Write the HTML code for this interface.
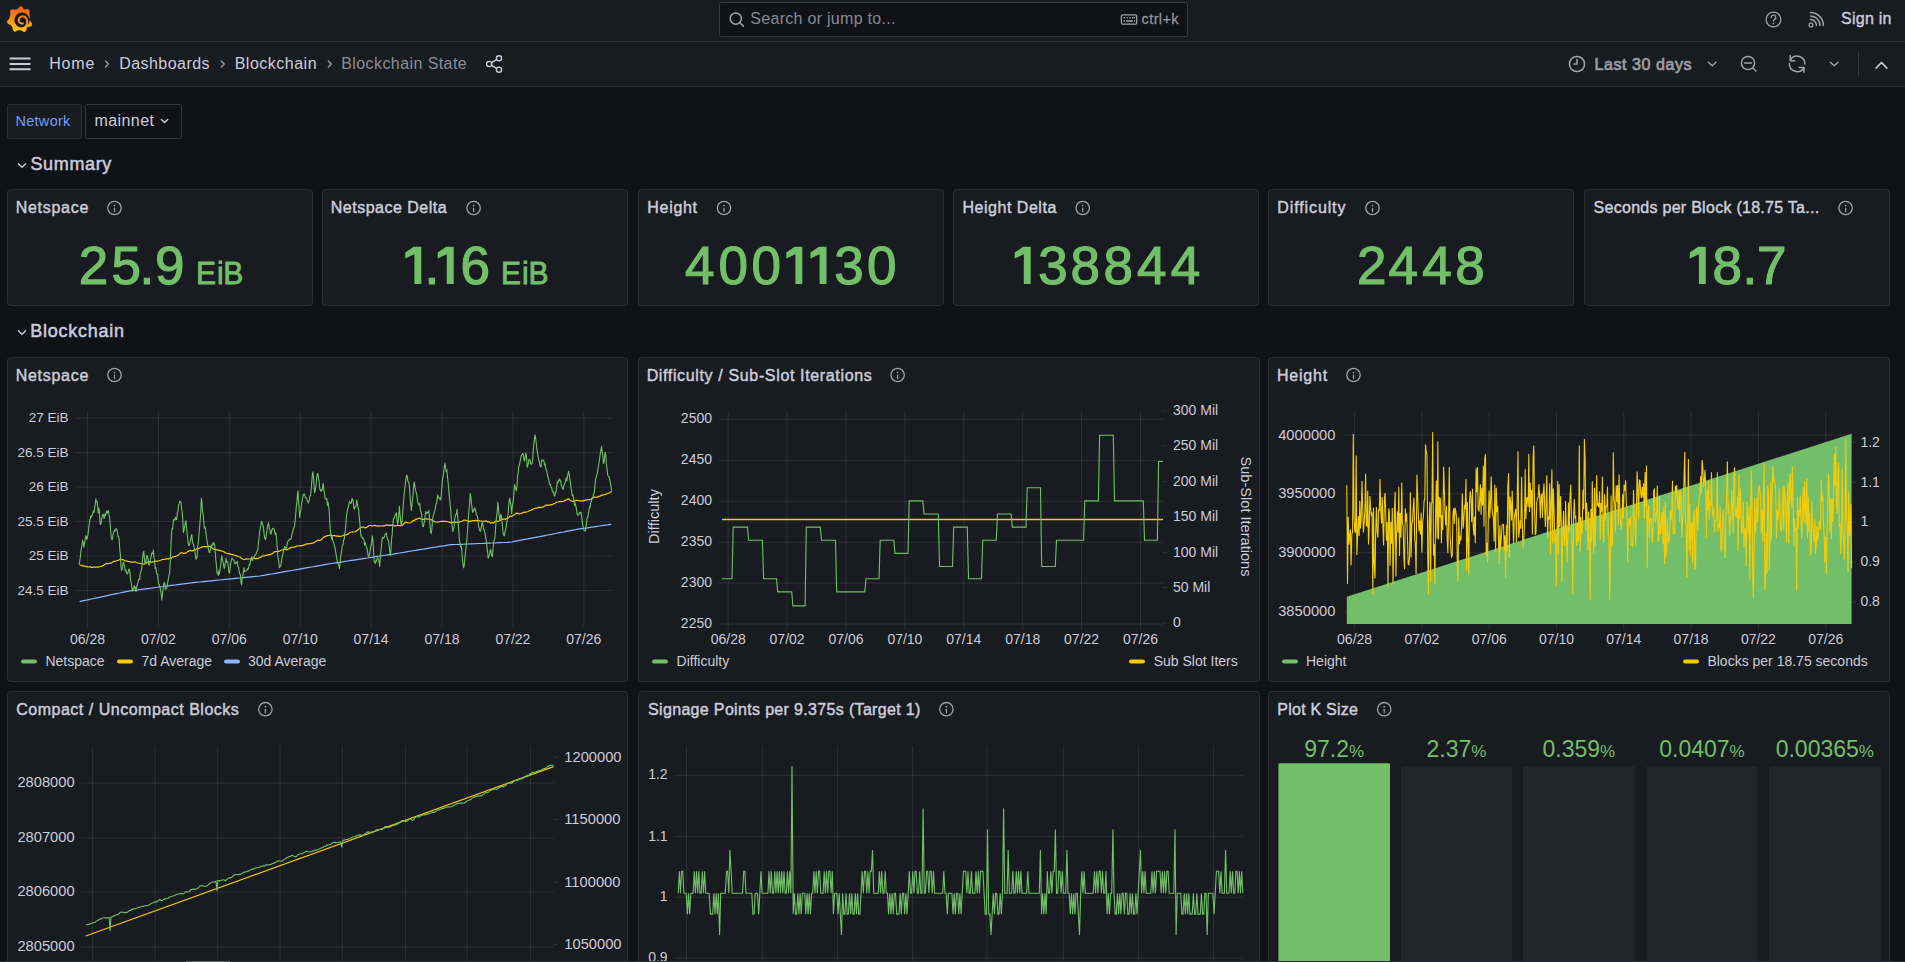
<!DOCTYPE html>
<html><head><meta charset="utf-8"><title>Blockchain State - Dashboards - Grafana</title>
<style>
html,body{margin:0;padding:0;background:#111217;overflow:hidden;width:1905px;height:962px}
svg{display:block;font-family:"Liberation Sans",sans-serif}
</style></head><body>
<svg width="1905" height="962" viewBox="0 0 1905 962">
<rect x="0" y="0" width="1905" height="962" fill="#111217" stroke="none" stroke-width="1" rx="0" />
<rect x="0" y="0" width="1905" height="87" fill="#181b1f" stroke="none" stroke-width="1" rx="0" />
<line x1="0" y1="41.5" x2="1905" y2="41.5" stroke="rgba(204,204,220,0.12)" stroke-width="1" />
<line x1="0" y1="86.5" x2="1905" y2="86.5" stroke="rgba(204,204,220,0.12)" stroke-width="1" />
<defs><linearGradient id="lg" x1="0" y1="1" x2="0" y2="0"><stop offset="0" stop-color="#FBCA0A"/><stop offset="1" stop-color="#F05A28"/></linearGradient><linearGradient id="lg2" gradientUnits="userSpaceOnUse" x1="0" y1="28" x2="0" y2="12"><stop offset="0" stop-color="#FBB414"/><stop offset="1" stop-color="#F26B24"/></linearGradient></defs>
<path d="M10.73,14.36 L10.35,11.40 L10.90,10.08 L12.24,9.57 L15.19,10.06 L17.62,9.17 L19.56,6.91 L20.91,6.43 L22.19,7.09 L23.80,9.60 L24.31,9.82 L27.23,9.18 L28.59,9.61 L29.22,10.91 L28.99,13.88 L30.44,21.34 L31.76,24.02 L31.67,25.45 L30.57,26.36 L27.63,26.86 L26.67,27.74 L25.92,30.63 L24.91,31.65 L23.47,31.61 L20.92,30.06 L18.16,29.94 L15.48,31.26 L14.05,31.17 L13.14,30.07 L12.64,27.13 L10.82,24.80 L8.09,23.60 L7.24,22.45 L7.49,21.04 L9.43,18.76Z" fill="url(#lg)" stroke="url(#lg)" stroke-width="0.6" stroke-linejoin="round"/>
<circle cx="22" cy="20.0" r="7.6" fill="#181b1f"/>
<path d="M27.00,19.70 L32.52,16.84 L31.14,20.67 Z" fill="#181b1f"/>
<path d="M22.94,23.45 L22.69,23.51 L22.43,23.55 L22.18,23.56 L21.92,23.56 L21.65,23.53 L21.39,23.48 L21.14,23.41 L20.88,23.32 L20.64,23.20 L20.40,23.07 L20.17,22.91 L19.96,22.74 L19.76,22.55 L19.57,22.34 L19.40,22.11 L19.25,21.87 L19.12,21.62 L19.01,21.35 L18.92,21.08 L18.85,20.79 L18.81,20.50 L18.79,20.21 L18.79,19.91 L18.82,19.61 L18.88,19.32 L18.96,19.02 L19.06,18.74 L19.19,18.46 L19.34,18.19 L19.51,17.93 L19.70,17.69 L19.92,17.46 L20.15,17.24 L20.41,17.05 L20.68,16.88 L20.96,16.73 L21.26,16.60 L21.57,16.50 L21.89,16.42 L22.21,16.37 L22.54,16.34 L22.88,16.34 L23.21,16.37 L23.54,16.43 L23.87,16.52 L24.19,16.63 L24.51,16.77 L24.81,16.93 L25.10,17.12 L25.38,17.34 L25.63,17.57 L25.87,17.83 L26.09,18.11 L26.29,18.41 L26.46,18.73 L26.60,19.06 L26.72,19.40 L26.81,19.75 L26.87,20.11 L26.92,20.48 L27.01,20.86 L27.09,21.26 L27.15,21.68 L27.18,22.12 L27.18,22.57 L27.14,23.04 L27.06,23.52 L26.94,24.01 L26.77,24.50 L26.55,24.99 L26.29,25.47 L25.97,25.94 L25.60,26.40 L25.19,26.83 L24.72,27.24 L24.21,27.61 L23.65,27.95 L23.04,28.25 L22.40,28.50" stroke="url(#lg2)" stroke-width="2.0" fill="none" stroke-linecap="round"/>
<rect x="719.5" y="2.5" width="468" height="34" fill="#111217" stroke="rgba(204,204,220,0.2)" stroke-width="1" rx="2" />
<g stroke="#9fa0aa" stroke-width="1.5" fill="none" stroke-linecap="round"><circle cx="735.8" cy="18.6" r="5.6"/><line x1="739.9" y1="22.7" x2="743.3" y2="26.1"/></g>
<text x="750.30" y="24.4" font-size="16" fill="rgba(204,204,220,0.65)" font-weight="normal" letter-spacing="0.289" >Search or jump to...</text>
<g stroke="#9fa0aa" stroke-width="1.3" fill="none"><rect x="1121.4" y="14.8" width="15.3" height="9.4" rx="1.5"/></g><g fill="#9fa0aa"><rect x="1123.6" y="17" width="1.4" height="1.4"/><rect x="1126.4" y="17" width="1.4" height="1.4"/><rect x="1129.2" y="17" width="1.4" height="1.4"/><rect x="1132" y="17" width="1.4" height="1.4"/><rect x="1134" y="17" width="1.2" height="1.4"/><rect x="1126" y="20.2" width="7" height="1.5"/><rect x="1123.6" y="20.2" width="1.4" height="1.4"/><rect x="1134" y="20.2" width="1.2" height="1.4"/></g>
<text x="1141.55" y="24.2" font-size="14.5" fill="rgba(204,204,220,0.65)" font-weight="normal" letter-spacing="0.400" stroke="rgba(204,204,220,0.65)" stroke-width="0.3" >ctrl+k</text>
<g stroke="#9fa0aa" stroke-width="1.3" fill="none"><circle cx="1773.5" cy="19.5" r="7.4"/><path d="M1771.2,17.4 a2.3,2.3 0 1 1 3.4,2 c-0.8,0.5 -1.1,0.9 -1.1,1.7" stroke-linecap="round"/></g><circle cx="1773.5" cy="23.6" r="0.9" fill="#9fa0aa"/>
<g stroke="#9fa0aa" stroke-width="1.5" fill="none" stroke-linecap="round"><path d="M1810.5,19.5 a6,6 0 0 1 6,6"/><path d="M1810.5,16 a9.5,9.5 0 0 1 9.5,9.5"/><path d="M1810.5,12.6 a12.9,12.9 0 0 1 12.9,12.9"/></g><circle cx="1811" cy="25" r="1.9" fill="none" stroke="#9fa0aa" stroke-width="1.3"/>
<text x="1841.10" y="24.4" font-size="16" fill="#ccccdc" font-weight="normal" letter-spacing="0.250" stroke="#ccccdc" stroke-width="0.4" >Sign in</text>
<g stroke="#ccccdc" stroke-width="2" stroke-linecap="round"><line x1="10.4" y1="58.6" x2="29.8" y2="58.6"/><line x1="10.4" y1="64" x2="29.8" y2="64"/><line x1="10.4" y1="69.3" x2="29.8" y2="69.3"/></g>
<text x="49.30" y="68.8" font-size="16" fill="#ccccdc" font-weight="normal" letter-spacing="0.767" >Home</text>
<path d="M105.5,61 L108.5,64 L105.5,67" stroke="#9fa0aa" stroke-width="1.3" fill="none" stroke-linecap="round" stroke-linejoin="round"/>
<text x="119.20" y="68.8" font-size="16" fill="#ccccdc" font-weight="normal" letter-spacing="0.456" >Dashboards</text>
<path d="M221.3,61 L224.3,64 L221.3,67" stroke="#9fa0aa" stroke-width="1.3" fill="none" stroke-linecap="round" stroke-linejoin="round"/>
<text x="234.70" y="68.8" font-size="16" fill="#ccccdc" font-weight="normal" letter-spacing="0.500" >Blockchain</text>
<path d="M328.3,61 L331.3,64 L328.3,67" stroke="#9fa0aa" stroke-width="1.3" fill="none" stroke-linecap="round" stroke-linejoin="round"/>
<text x="341.20" y="68.8" font-size="16" fill="rgba(204,204,220,0.65)" font-weight="normal" letter-spacing="0.420" >Blockchain State</text>
<g stroke="#ccccdc" stroke-width="1.4" fill="none"><circle cx="489.2" cy="64" r="2.6"/><circle cx="499" cy="58.3" r="2.6"/><circle cx="499" cy="69.7" r="2.6"/><line x1="491.5" y1="62.7" x2="496.7" y2="59.6"/><line x1="491.5" y1="65.3" x2="496.7" y2="68.4"/></g>
<g stroke="#9fa0aa" stroke-width="1.5" fill="none" stroke-linecap="round"><circle cx="1577" cy="64" r="7.6"/><path d="M1577,59.5 V64 H1574"/></g>
<text x="1594.45" y="69.8" font-size="16" fill="#9c9ca8" font-weight="normal" letter-spacing="0.582" stroke="#9c9ca8" stroke-width="0.7" >Last 30 days</text>
<path d="M1708.4,62.2 L1712.2,65.8 L1716.0,62.2" stroke="#9fa0aa" stroke-width="1.4" fill="none" stroke-linecap="round" stroke-linejoin="round"/>
<g stroke="#9fa0aa" stroke-width="1.5" fill="none" stroke-linecap="round"><circle cx="1748" cy="63" r="6.6"/><line x1="1744.5" y1="63" x2="1751.5" y2="63"/><line x1="1752.8" y1="67.8" x2="1756" y2="71"/></g>
<g stroke="#a3a3ae" stroke-width="1.5" fill="none" stroke-linecap="round" stroke-linejoin="round"><path d="M1804.9,64 A7.8,7.8 0 0 0 1790.6,59.6"/><path d="M1790.2,55.5 V60.7 H1794.8"/><path d="M1789.4,63.6 A7.8,7.8 0 0 0 1803.8,68"/><path d="M1799.3,67.6 H1803.9 V72.3"/></g>
<path d="M1830.4,62.2 L1834.2,65.8 L1838.0,62.2" stroke="#9fa0aa" stroke-width="1.4" fill="none" stroke-linecap="round" stroke-linejoin="round"/>
<line x1="1858.5" y1="51" x2="1858.5" y2="77" stroke="rgba(204,204,220,0.15)" stroke-width="1" />
<path d="M1876.2,68 L1881.5,62.5 L1886.8,68" stroke="#ccccdc" stroke-width="1.8" fill="none" stroke-linecap="round" stroke-linejoin="round"/>
<rect x="7.5" y="104.5" width="74" height="34" fill="#181b1f" stroke="rgba(204,204,220,0.12)" stroke-width="1" rx="2" />
<text x="15.40" y="126.4" font-size="14.5" fill="#6E9FFF" font-weight="normal" letter-spacing="0.300" >Network</text>
<rect x="85.5" y="104.5" width="96" height="34" fill="#111217" stroke="rgba(204,204,220,0.2)" stroke-width="1" rx="2" />
<text x="94.40" y="126.4" font-size="16" fill="#ccccdc" font-weight="normal" letter-spacing="0.433" >mainnet</text>
<path d="M161.3,119.5 L164.5,122.5 L167.7,119.5" stroke="#ccccdc" stroke-width="1.4" fill="none" stroke-linecap="round" stroke-linejoin="round"/>
<path d="M18.4,163.7 L22,167.3 L25.6,163.7" stroke="#ccccdc" stroke-width="1.4" fill="none" stroke-linecap="round" stroke-linejoin="round"/>
<text x="30.45" y="170" font-size="18" fill="#ccccdc" font-weight="normal" letter-spacing="0.650" stroke="#ccccdc" stroke-width="0.5" >Summary</text>
<rect x="7.5" y="189.5" width="305" height="116" fill="#181b1f" stroke="rgba(204,204,220,0.12)" stroke-width="1" rx="3" />
<text x="15.72" y="212.7" font-size="16" fill="#ccccdc" font-weight="normal" letter-spacing="0.721" stroke="#ccccdc" stroke-width="0.45" >Netspace</text>
<g stroke="#9fa0aa" fill="none"><circle cx="114.5" cy="208" r="6.7" stroke-width="1.3"/><line x1="114.5" y1="208.1" x2="114.5" y2="211.5" stroke-width="1.25" stroke-linecap="round"/></g><circle cx="114.5" cy="205.5" r="0.85" fill="#9fa0aa"/>
<text x="0" y="0" transform="translate(78.80,283.5) scale(1,1.0)" font-size="53" fill="#73BF69" stroke="#73BF69" stroke-width="1.2">2</text>
<text x="0" y="0" transform="translate(111.50,283.5) scale(1,1.0)" font-size="53" fill="#73BF69" stroke="#73BF69" stroke-width="1.2">5</text>
<text x="0" y="0" transform="translate(139.50,283.5) scale(1,1.0)" font-size="53" fill="#73BF69" stroke="#73BF69" stroke-width="1.2">.</text>
<text x="0" y="0" transform="translate(155.00,283.5) scale(1,1.0)" font-size="53" fill="#73BF69" stroke="#73BF69" stroke-width="1.2">9</text>
<text x="0" y="0" transform="translate(195.90,283.5) scale(1,1.07)" font-size="30" fill="#73BF69" stroke="#73BF69" stroke-width="0.8">E</text>
<text x="0" y="0" transform="translate(216.90,283.5) scale(1,1.07)" font-size="30" fill="#73BF69" stroke="#73BF69" stroke-width="0.8">i</text>
<text x="0" y="0" transform="translate(223.30,283.5) scale(1,1.07)" font-size="30" fill="#73BF69" stroke="#73BF69" stroke-width="0.8">B</text>
<rect x="322.5" y="189.5" width="305" height="116" fill="#181b1f" stroke="rgba(204,204,220,0.12)" stroke-width="1" rx="3" />
<text x="330.82" y="212.7" font-size="16" fill="#ccccdc" font-weight="normal" letter-spacing="0.488" stroke="#ccccdc" stroke-width="0.45" >Netspace Delta</text>
<g stroke="#9fa0aa" fill="none"><circle cx="473.6" cy="208" r="6.7" stroke-width="1.3"/><line x1="473.6" y1="208.1" x2="473.6" y2="211.5" stroke-width="1.25" stroke-linecap="round"/></g><circle cx="473.6" cy="205.5" r="0.85" fill="#9fa0aa"/>
<path d="M413.70,246.70 L421.30,246.70 L421.30,284.10 L414.40,284.10 L414.40,254.30 L405.30,258.50 L405.30,252.60Z" fill="#73BF69"/>
<text x="0" y="0" transform="translate(424.60,283.5) scale(1,1.0)" font-size="53" fill="#73BF69" stroke="#73BF69" stroke-width="1.2">.</text>
<path d="M446.10,246.70 L453.70,246.70 L453.70,284.10 L446.80,284.10 L446.80,254.30 L437.70,258.50 L437.70,252.60Z" fill="#73BF69"/>
<text x="0" y="0" transform="translate(460.60,283.5) scale(1,1.0)" font-size="53" fill="#73BF69" stroke="#73BF69" stroke-width="1.2">6</text>
<text x="0" y="0" transform="translate(501.10,283.5) scale(1,1.07)" font-size="30" fill="#73BF69" stroke="#73BF69" stroke-width="0.8">E</text>
<text x="0" y="0" transform="translate(522.10,283.5) scale(1,1.07)" font-size="30" fill="#73BF69" stroke="#73BF69" stroke-width="0.8">i</text>
<text x="0" y="0" transform="translate(528.50,283.5) scale(1,1.07)" font-size="30" fill="#73BF69" stroke="#73BF69" stroke-width="0.8">B</text>
<rect x="638.5" y="189.5" width="305" height="116" fill="#181b1f" stroke="rgba(204,204,220,0.12)" stroke-width="1" rx="3" />
<text x="647.33" y="212.7" font-size="16" fill="#ccccdc" font-weight="normal" letter-spacing="0.690" stroke="#ccccdc" stroke-width="0.45" >Height</text>
<g stroke="#9fa0aa" fill="none"><circle cx="724" cy="208" r="6.7" stroke-width="1.3"/><line x1="724" y1="208.1" x2="724" y2="211.5" stroke-width="1.25" stroke-linecap="round"/></g><circle cx="724" cy="205.5" r="0.85" fill="#9fa0aa"/>
<text x="0" y="0" transform="translate(685.10,283.5) scale(1,1.0)" font-size="53" fill="#73BF69" stroke="#73BF69" stroke-width="1.2">4</text>
<text x="0" y="0" transform="translate(718.40,283.5) scale(1,1.0)" font-size="53" fill="#73BF69" stroke="#73BF69" stroke-width="1.2">0</text>
<text x="0" y="0" transform="translate(751.50,283.5) scale(1,1.0)" font-size="53" fill="#73BF69" stroke="#73BF69" stroke-width="1.2">0</text>
<path d="M794.70,246.70 L802.30,246.70 L802.30,284.10 L795.40,284.10 L795.40,254.30 L786.30,258.50 L786.30,252.60Z" fill="#73BF69"/>
<path d="M818.90,246.70 L826.50,246.70 L826.50,284.10 L819.60,284.10 L819.60,254.30 L810.50,258.50 L810.50,252.60Z" fill="#73BF69"/>
<text x="0" y="0" transform="translate(834.30,283.5) scale(1,1.0)" font-size="53" fill="#73BF69" stroke="#73BF69" stroke-width="1.2">3</text>
<text x="0" y="0" transform="translate(866.90,283.5) scale(1,1.0)" font-size="53" fill="#73BF69" stroke="#73BF69" stroke-width="1.2">0</text>
<rect x="953.5" y="189.5" width="305" height="116" fill="#181b1f" stroke="rgba(204,204,220,0.12)" stroke-width="1" rx="3" />
<text x="962.43" y="212.7" font-size="16" fill="#ccccdc" font-weight="normal" letter-spacing="0.532" stroke="#ccccdc" stroke-width="0.45" >Height Delta</text>
<g stroke="#9fa0aa" fill="none"><circle cx="1082.7" cy="208" r="6.7" stroke-width="1.3"/><line x1="1082.7" y1="208.1" x2="1082.7" y2="211.5" stroke-width="1.25" stroke-linecap="round"/></g><circle cx="1082.7" cy="205.5" r="0.85" fill="#9fa0aa"/>
<path d="M1023.10,246.70 L1030.70,246.70 L1030.70,284.10 L1023.80,284.10 L1023.80,254.30 L1014.70,258.50 L1014.70,252.60Z" fill="#73BF69"/>
<text x="0" y="0" transform="translate(1038.20,283.5) scale(1,1.0)" font-size="53" fill="#73BF69" stroke="#73BF69" stroke-width="1.2">3</text>
<text x="0" y="0" transform="translate(1070.50,283.5) scale(1,1.0)" font-size="53" fill="#73BF69" stroke="#73BF69" stroke-width="1.2">8</text>
<text x="0" y="0" transform="translate(1103.60,283.5) scale(1,1.0)" font-size="53" fill="#73BF69" stroke="#73BF69" stroke-width="1.2">8</text>
<text x="0" y="0" transform="translate(1136.90,283.5) scale(1,1.0)" font-size="53" fill="#73BF69" stroke="#73BF69" stroke-width="1.2">4</text>
<text x="0" y="0" transform="translate(1170.80,283.5) scale(1,1.0)" font-size="53" fill="#73BF69" stroke="#73BF69" stroke-width="1.2">4</text>
<rect x="1268.5" y="189.5" width="305" height="116" fill="#181b1f" stroke="rgba(204,204,220,0.12)" stroke-width="1" rx="3" />
<text x="1277.33" y="212.7" font-size="16" fill="#ccccdc" font-weight="normal" letter-spacing="0.883" stroke="#ccccdc" stroke-width="0.45" >Difficulty</text>
<g stroke="#9fa0aa" fill="none"><circle cx="1372.5" cy="208" r="6.7" stroke-width="1.3"/><line x1="1372.5" y1="208.1" x2="1372.5" y2="211.5" stroke-width="1.25" stroke-linecap="round"/></g><circle cx="1372.5" cy="205.5" r="0.85" fill="#9fa0aa"/>
<text x="0" y="0" transform="translate(1356.90,283.5) scale(1,1.0)" font-size="53" fill="#73BF69" stroke="#73BF69" stroke-width="1.2">2</text>
<text x="0" y="0" transform="translate(1388.60,283.5) scale(1,1.0)" font-size="53" fill="#73BF69" stroke="#73BF69" stroke-width="1.2">4</text>
<text x="0" y="0" transform="translate(1422.30,283.5) scale(1,1.0)" font-size="53" fill="#73BF69" stroke="#73BF69" stroke-width="1.2">4</text>
<text x="0" y="0" transform="translate(1455.30,283.5) scale(1,1.0)" font-size="53" fill="#73BF69" stroke="#73BF69" stroke-width="1.2">8</text>
<rect x="1584.5" y="189.5" width="305" height="116" fill="#181b1f" stroke="rgba(204,204,220,0.12)" stroke-width="1" rx="3" />
<text x="1593.62" y="212.7" font-size="16" fill="#ccccdc" font-weight="normal" letter-spacing="0.274" stroke="#ccccdc" stroke-width="0.45" >Seconds per Block (18.75 Ta...</text>
<g stroke="#9fa0aa" fill="none"><circle cx="1845.6" cy="208" r="6.7" stroke-width="1.3"/><line x1="1845.6" y1="208.1" x2="1845.6" y2="211.5" stroke-width="1.25" stroke-linecap="round"/></g><circle cx="1845.6" cy="205.5" r="0.85" fill="#9fa0aa"/>
<path d="M1698.20,246.70 L1705.80,246.70 L1705.80,284.10 L1698.90,284.10 L1698.90,254.30 L1689.80,258.50 L1689.80,252.60Z" fill="#73BF69"/>
<text x="0" y="0" transform="translate(1712.60,283.5) scale(1,1.0)" font-size="53" fill="#73BF69" stroke="#73BF69" stroke-width="1.2">8</text>
<text x="0" y="0" transform="translate(1742.60,283.5) scale(1,1.0)" font-size="53" fill="#73BF69" stroke="#73BF69" stroke-width="1.2">.</text>
<text x="0" y="0" transform="translate(1756.90,283.5) scale(1,1.0)" font-size="53" fill="#73BF69" stroke="#73BF69" stroke-width="1.2">7</text>
<path d="M18.4,330.7 L22,334.3 L25.6,330.7" stroke="#ccccdc" stroke-width="1.4" fill="none" stroke-linecap="round" stroke-linejoin="round"/>
<text x="30.25" y="337.2" font-size="18" fill="#ccccdc" font-weight="normal" letter-spacing="0.744" stroke="#ccccdc" stroke-width="0.5" >Blockchain</text>
<rect x="7.5" y="357.5" width="620" height="324" fill="#181b1f" stroke="rgba(204,204,220,0.12)" stroke-width="1" rx="3" />
<rect x="638.5" y="357.5" width="621" height="324" fill="#181b1f" stroke="rgba(204,204,220,0.12)" stroke-width="1" rx="3" />
<rect x="1268.5" y="357.5" width="621" height="324" fill="#181b1f" stroke="rgba(204,204,220,0.12)" stroke-width="1" rx="3" />
<rect x="7.5" y="691.5" width="620" height="299" fill="#181b1f" stroke="rgba(204,204,220,0.12)" stroke-width="1" rx="3" />
<rect x="638.5" y="691.5" width="621" height="299" fill="#181b1f" stroke="rgba(204,204,220,0.12)" stroke-width="1" rx="3" />
<rect x="1268.5" y="691.5" width="621" height="299" fill="#181b1f" stroke="rgba(204,204,220,0.12)" stroke-width="1" rx="3" />
<text x="15.72" y="380.7" font-size="16" fill="#ccccdc" font-weight="normal" letter-spacing="0.721" stroke="#ccccdc" stroke-width="0.45" >Netspace</text>
<g stroke="#9fa0aa" fill="none"><circle cx="114.5" cy="375" r="6.7" stroke-width="1.3"/><line x1="114.5" y1="375.1" x2="114.5" y2="378.5" stroke-width="1.25" stroke-linecap="round"/></g><circle cx="114.5" cy="372.5" r="0.85" fill="#9fa0aa"/>
<text x="646.63" y="380.7" font-size="16" fill="#ccccdc" font-weight="normal" letter-spacing="0.644" stroke="#ccccdc" stroke-width="0.45" >Difficulty / Sub-Slot Iterations</text>
<g stroke="#9fa0aa" fill="none"><circle cx="897.6" cy="375" r="6.7" stroke-width="1.3"/><line x1="897.6" y1="375.1" x2="897.6" y2="378.5" stroke-width="1.25" stroke-linecap="round"/></g><circle cx="897.6" cy="372.5" r="0.85" fill="#9fa0aa"/>
<text x="1276.92" y="380.7" font-size="16" fill="#ccccdc" font-weight="normal" letter-spacing="0.790" stroke="#ccccdc" stroke-width="0.45" >Height</text>
<g stroke="#9fa0aa" fill="none"><circle cx="1353.5" cy="375" r="6.7" stroke-width="1.3"/><line x1="1353.5" y1="375.1" x2="1353.5" y2="378.5" stroke-width="1.25" stroke-linecap="round"/></g><circle cx="1353.5" cy="372.5" r="0.85" fill="#9fa0aa"/>
<line x1="87.5" y1="411.5" x2="87.5" y2="627" stroke="rgba(240,250,255,0.09)" stroke-width="1" />
<line x1="158.4" y1="411.5" x2="158.4" y2="627" stroke="rgba(240,250,255,0.09)" stroke-width="1" />
<line x1="229.3" y1="411.5" x2="229.3" y2="627" stroke="rgba(240,250,255,0.09)" stroke-width="1" />
<line x1="300.2" y1="411.5" x2="300.2" y2="627" stroke="rgba(240,250,255,0.09)" stroke-width="1" />
<line x1="371.1" y1="411.5" x2="371.1" y2="627" stroke="rgba(240,250,255,0.09)" stroke-width="1" />
<line x1="442.0" y1="411.5" x2="442.0" y2="627" stroke="rgba(240,250,255,0.09)" stroke-width="1" />
<line x1="512.9" y1="411.5" x2="512.9" y2="627" stroke="rgba(240,250,255,0.09)" stroke-width="1" />
<line x1="583.8" y1="411.5" x2="583.8" y2="627" stroke="rgba(240,250,255,0.09)" stroke-width="1" />
<line x1="75.5" y1="418" x2="611.5" y2="418" stroke="rgba(240,250,255,0.09)" stroke-width="1" />
<text x="68.6" y="422.0" font-size="13.5" fill="#ccccdc" text-anchor="end" font-weight="normal" >27 EiB</text>
<line x1="75.5" y1="452.5" x2="611.5" y2="452.5" stroke="rgba(240,250,255,0.09)" stroke-width="1" />
<text x="68.6" y="456.5" font-size="13.5" fill="#ccccdc" text-anchor="end" font-weight="normal" >26.5 EiB</text>
<line x1="75.5" y1="487" x2="611.5" y2="487" stroke="rgba(240,250,255,0.09)" stroke-width="1" />
<text x="68.6" y="491.0" font-size="13.5" fill="#ccccdc" text-anchor="end" font-weight="normal" >26 EiB</text>
<line x1="75.5" y1="521.5" x2="611.5" y2="521.5" stroke="rgba(240,250,255,0.09)" stroke-width="1" />
<text x="68.6" y="525.5" font-size="13.5" fill="#ccccdc" text-anchor="end" font-weight="normal" >25.5 EiB</text>
<line x1="75.5" y1="556" x2="611.5" y2="556" stroke="rgba(240,250,255,0.09)" stroke-width="1" />
<text x="68.6" y="560.0" font-size="13.5" fill="#ccccdc" text-anchor="end" font-weight="normal" >25 EiB</text>
<line x1="75.5" y1="590.6" x2="611.5" y2="590.6" stroke="rgba(240,250,255,0.09)" stroke-width="1" />
<text x="68.6" y="594.6" font-size="13.5" fill="#ccccdc" text-anchor="end" font-weight="normal" >24.5 EiB</text>
<text x="87.5" y="643.5" font-size="14" fill="#ccccdc" text-anchor="middle" font-weight="normal" >06/28</text>
<text x="158.4" y="643.5" font-size="14" fill="#ccccdc" text-anchor="middle" font-weight="normal" >07/02</text>
<text x="229.3" y="643.5" font-size="14" fill="#ccccdc" text-anchor="middle" font-weight="normal" >07/06</text>
<text x="300.2" y="643.5" font-size="14" fill="#ccccdc" text-anchor="middle" font-weight="normal" >07/10</text>
<text x="371.1" y="643.5" font-size="14" fill="#ccccdc" text-anchor="middle" font-weight="normal" >07/14</text>
<text x="442.0" y="643.5" font-size="14" fill="#ccccdc" text-anchor="middle" font-weight="normal" >07/18</text>
<text x="512.9" y="643.5" font-size="14" fill="#ccccdc" text-anchor="middle" font-weight="normal" >07/22</text>
<text x="583.8" y="643.5" font-size="14" fill="#ccccdc" text-anchor="middle" font-weight="normal" >07/26</text>
<path d="M79.6,601.6 L83.6,600.7 L87.6,599.9 L91.6,599.0 L95.6,598.2 L99.6,597.3 L103.6,596.4 L107.6,595.6 L111.6,594.7 L115.6,593.8 L119.6,593.0 L123.6,592.1 L127.6,591.3 L131.6,590.7 L135.6,590.2 L139.6,589.7 L143.6,589.1 L147.6,588.6 L151.6,588.1 L155.6,587.5 L159.6,587.0 L163.6,586.5 L167.6,585.9 L171.6,585.4 L175.6,584.9 L179.6,584.3 L183.6,583.8 L187.6,583.3 L191.6,582.8 L195.6,582.4 L199.6,582.0 L203.6,581.6 L207.6,581.2 L211.6,580.8 L215.6,580.4 L219.6,580.0 L223.6,579.6 L227.6,579.2 L231.6,578.8 L235.6,578.4 L239.6,578.0 L243.6,577.6 L247.6,577.2 L251.6,576.8 L255.6,576.4 L259.6,576.0 L263.6,575.4 L267.6,574.7 L271.6,574.0 L275.6,573.3 L279.6,572.6 L283.6,571.9 L287.6,571.2 L291.6,570.5 L295.6,569.8 L299.6,569.1 L303.6,568.4 L307.6,567.7 L311.6,567.0 L315.6,566.3 L319.6,565.6 L323.6,564.9 L327.6,564.2 L331.6,563.5 L335.6,562.9 L339.6,562.3 L343.6,561.7 L347.6,561.0 L351.6,560.4 L355.6,559.8 L359.6,559.2 L363.6,558.6 L367.6,558.0 L371.6,557.3 L375.6,556.7 L379.6,556.1 L383.6,555.5 L387.6,554.9 L391.6,554.3 L395.6,553.6 L399.6,553.0 L403.6,552.4 L407.6,551.7 L411.6,551.0 L415.6,550.4 L419.6,549.7 L423.6,549.1 L427.6,548.4 L431.6,547.7 L435.6,547.1 L439.6,546.4 L443.6,545.8 L447.6,545.1 L451.6,544.6 L455.6,544.5 L459.6,544.3 L463.6,544.2 L467.6,544.0 L471.6,543.8 L475.6,543.7 L479.6,543.5 L483.6,543.4 L487.6,543.2 L491.6,543.0 L495.6,542.9 L499.6,542.7 L503.6,542.5 L507.6,542.4 L511.6,542.0 L515.6,541.2 L519.6,540.4 L523.6,539.6 L527.6,538.9 L531.6,538.1 L535.6,537.3 L539.6,536.6 L543.6,535.8 L547.6,535.0 L551.6,534.3 L555.6,533.5 L559.6,532.7 L563.6,532.0 L567.6,531.2 L571.6,530.4 L575.6,529.7 L579.6,528.9 L583.6,528.3 L587.6,527.8 L591.6,527.2 L595.6,526.6 L599.6,526.0 L603.6,525.4 L607.6,524.9 L611.4,524.3" stroke="#8AB8FF" stroke-width="1.2" fill="none" />
<path d="M79.6,565.1 L81.1,565.0 L82.6,566.0 L84.1,565.6 L85.6,566.7 L87.1,566.7 L88.6,567.2 L90.1,566.7 L91.6,567.5 L93.1,567.1 L94.6,567.2 L96.1,567.1 L97.6,567.1 L99.1,566.8 L100.6,566.5 L102.1,566.1 L103.6,565.3 L105.1,564.3 L106.6,563.3 L108.1,563.6 L109.6,563.4 L111.1,563.2 L112.6,562.1 L114.1,561.3 L115.6,561.1 L117.1,560.5 L118.6,560.3 L120.1,559.1 L121.6,559.6 L123.1,559.6 L124.6,560.5 L126.1,561.1 L127.6,561.1 L129.1,561.7 L130.6,561.8 L132.1,562.3 L133.6,561.9 L135.1,561.8 L136.6,562.5 L138.1,563.0 L139.6,563.5 L141.1,563.5 L142.6,563.9 L144.1,564.2 L145.6,563.4 L147.1,562.3 L148.6,561.8 L150.1,561.7 L151.6,562.3 L153.1,561.6 L154.6,561.6 L156.1,561.2 L157.6,561.2 L159.1,560.7 L160.6,560.2 L162.1,559.7 L163.6,559.4 L165.1,559.3 L166.6,558.7 L168.1,559.0 L169.6,558.3 L171.1,558.4 L172.6,557.1 L174.1,556.5 L175.6,556.4 L177.1,555.7 L178.6,554.8 L180.1,553.2 L181.6,552.7 L183.1,553.4 L184.6,553.2 L186.1,553.1 L187.6,551.4 L189.1,550.9 L190.6,550.4 L192.1,551.1 L193.6,550.4 L195.1,550.0 L196.6,549.1 L198.1,548.6 L199.6,548.1 L201.1,547.5 L202.6,546.7 L204.1,546.6 L205.6,546.6 L207.1,546.9 L208.6,545.9 L210.1,546.7 L211.6,547.5 L213.1,548.9 L214.6,549.4 L216.1,549.7 L217.6,550.1 L219.1,550.1 L220.6,550.8 L222.1,551.0 L223.6,551.6 L225.1,552.6 L226.6,553.2 L228.1,553.7 L229.6,553.7 L231.1,554.3 L232.6,554.6 L234.1,555.1 L235.6,555.5 L237.1,556.1 L238.6,556.8 L240.1,557.1 L241.6,558.6 L243.1,559.3 L244.6,559.6 L246.1,558.8 L247.6,559.1 L249.1,559.0 L250.6,558.9 L252.1,558.2 L253.6,558.1 L255.1,558.6 L256.6,558.4 L258.1,558.6 L259.6,557.4 L261.1,557.2 L262.6,555.6 L264.1,556.2 L265.6,555.4 L267.1,555.3 L268.6,554.6 L270.1,554.7 L271.6,553.9 L273.1,553.0 L274.6,551.6 L276.1,551.6 L277.6,551.3 L279.1,551.3 L280.6,550.5 L282.1,550.0 L283.6,549.5 L285.1,549.5 L286.6,549.8 L288.1,549.0 L289.6,548.4 L291.1,547.2 L292.6,547.7 L294.1,547.0 L295.6,546.7 L297.1,545.8 L298.6,546.0 L300.1,545.7 L301.6,545.7 L303.1,545.3 L304.6,544.9 L306.1,544.1 L307.6,543.8 L309.1,543.7 L310.6,543.6 L312.1,543.2 L313.6,542.9 L315.1,541.9 L316.6,540.7 L318.1,540.2 L319.6,540.5 L321.1,539.9 L322.6,538.3 L324.1,536.9 L325.6,536.4 L327.1,535.7 L328.6,535.5 L330.1,535.2 L331.6,535.3 L333.1,535.5 L334.6,535.7 L336.1,536.1 L337.6,535.9 L339.1,536.4 L340.6,536.3 L342.1,536.0 L343.6,535.0 L345.1,535.1 L346.6,534.7 L348.1,533.9 L349.6,532.7 L351.1,532.0 L352.6,532.0 L354.1,532.0 L355.6,531.6 L357.1,530.6 L358.6,529.3 L360.1,527.7 L361.6,527.3 L363.1,526.8 L364.6,527.8 L366.1,527.7 L367.6,526.8 L369.1,525.5 L370.6,525.5 L372.1,525.8 L373.6,525.6 L375.1,525.4 L376.6,525.9 L378.1,526.2 L379.6,525.9 L381.1,526.0 L382.6,525.8 L384.1,525.9 L385.6,525.1 L387.1,524.9 L388.6,525.3 L390.1,525.2 L391.6,525.4 L393.1,525.4 L394.6,525.8 L396.1,525.8 L397.6,525.1 L399.1,525.7 L400.6,525.7 L402.1,525.6 L403.6,523.9 L405.1,522.6 L406.6,522.3 L408.1,523.0 L409.6,523.0 L411.1,522.5 L412.6,521.1 L414.1,520.4 L415.6,519.4 L417.1,519.2 L418.6,518.1 L420.1,518.5 L421.6,519.1 L423.1,519.5 L424.6,518.9 L426.1,518.8 L427.6,519.2 L429.1,519.1 L430.6,519.5 L432.1,520.1 L433.6,521.0 L435.1,521.8 L436.6,522.0 L438.1,522.2 L439.6,521.7 L441.1,521.3 L442.6,521.3 L444.1,521.3 L445.6,521.4 L447.1,521.5 L448.6,521.9 L450.1,522.4 L451.6,522.8 L453.1,522.3 L454.6,522.1 L456.1,522.3 L457.6,522.0 L459.1,522.4 L460.6,521.5 L462.1,521.3 L463.6,520.1 L465.1,520.2 L466.6,520.5 L468.1,521.4 L469.6,521.3 L471.1,521.2 L472.6,520.7 L474.1,520.7 L475.6,520.4 L477.1,520.7 L478.6,520.4 L480.1,521.0 L481.6,521.0 L483.1,521.5 L484.6,521.2 L486.1,520.8 L487.6,521.8 L489.1,521.8 L490.6,523.0 L492.1,522.6 L493.6,522.9 L495.1,521.3 L496.6,521.0 L498.1,521.3 L499.6,520.8 L501.1,519.8 L502.6,519.1 L504.1,519.0 L505.6,519.4 L507.1,518.3 L508.6,517.8 L510.1,516.1 L511.6,516.6 L513.1,515.6 L514.6,514.7 L516.1,513.4 L517.6,513.1 L519.1,514.1 L520.6,513.5 L522.1,513.1 L523.6,512.1 L525.1,512.3 L526.6,511.8 L528.1,511.5 L529.6,510.7 L531.1,510.2 L532.6,509.4 L534.1,508.8 L535.6,508.2 L537.1,508.2 L538.6,507.2 L540.1,507.6 L541.6,507.1 L543.1,507.2 L544.6,506.0 L546.1,505.2 L547.6,505.0 L549.1,505.1 L550.6,504.9 L552.1,504.7 L553.6,503.8 L555.1,503.3 L556.6,502.0 L558.1,502.0 L559.6,501.6 L561.1,501.6 L562.6,501.3 L564.1,501.1 L565.6,500.0 L567.1,499.6 L568.6,498.8 L570.1,500.3 L571.6,501.2 L573.1,501.5 L574.6,501.2 L576.1,500.1 L577.6,500.5 L579.1,500.7 L580.6,501.2 L582.1,500.7 L583.6,501.1 L585.1,500.0 L586.6,500.1 L588.1,499.5 L589.6,499.8 L591.1,498.9 L592.6,497.9 L594.1,497.1 L595.6,497.0 L597.1,497.3 L598.6,496.5 L600.1,496.1 L601.6,495.2 L603.1,495.2 L604.6,494.5 L606.1,494.2 L607.6,493.5 L609.1,493.0 L610.6,492.0 L611.4,492.1" stroke="#F2CC0C" stroke-width="1.2" fill="none" />
<path d="M79.0,564.9 L79.6,561.8 L80.2,557.9 L80.8,552.0 L81.4,548.1 L82.0,545.5 L82.6,540.1 L83.2,542.2 L83.8,547.2 L84.4,543.8 L85.0,541.1 L85.6,535.7 L86.2,536.3 L86.8,539.5 L87.4,537.4 L88.0,534.9 L88.6,528.9 L89.2,525.0 L89.8,519.2 L90.4,519.1 L91.0,515.7 L91.6,516.9 L92.2,514.9 L92.8,513.1 L93.4,510.8 L94.0,512.5 L94.6,508.3 L95.2,504.9 L95.8,498.9 L96.4,501.8 L97.0,501.1 L97.6,505.7 L98.2,513.2 L98.8,508.0 L99.4,512.0 L100.0,522.9 L100.6,524.6 L101.2,522.5 L101.8,518.9 L102.4,515.5 L103.0,514.0 L103.6,516.2 L104.2,518.5 L104.8,514.1 L105.4,516.0 L106.0,513.2 L106.6,510.8 L107.2,513.3 L107.8,511.3 L108.4,510.5 L109.0,514.9 L109.6,518.0 L110.2,524.4 L110.8,532.5 L111.4,538.5 L112.0,539.7 L112.6,538.1 L113.2,533.5 L113.8,531.8 L114.4,530.3 L115.0,531.4 L115.6,529.0 L116.2,528.8 L116.8,529.1 L117.4,532.0 L118.0,536.3 L118.6,536.3 L119.2,540.6 L119.8,549.7 L120.4,554.9 L121.0,566.2 L121.6,570.3 L122.2,569.5 L122.8,564.9 L123.4,562.0 L124.0,563.9 L124.6,566.5 L125.2,571.0 L125.8,570.0 L126.4,572.1 L127.0,574.0 L127.6,573.5 L128.2,571.7 L128.8,569.2 L129.4,569.4 L130.0,573.4 L130.6,579.5 L131.2,583.2 L131.8,586.4 L132.4,591.2 L133.0,588.5 L133.6,588.8 L134.2,585.6 L134.8,588.3 L135.4,587.2 L136.0,591.8 L136.6,587.4 L137.2,584.6 L137.8,583.2 L138.4,580.0 L139.0,579.0 L139.6,579.6 L140.2,573.7 L140.8,571.6 L141.4,570.5 L142.0,565.4 L142.6,559.1 L143.2,553.1 L143.8,551.2 L144.4,558.5 L145.0,563.7 L145.6,563.5 L146.2,559.9 L146.8,555.3 L147.4,556.3 L148.0,558.8 L148.6,564.2 L149.2,565.1 L149.8,562.3 L150.4,559.5 L151.0,557.4 L151.6,553.3 L152.2,553.0 L152.8,553.8 L153.4,549.9 L154.0,558.2 L154.6,560.1 L155.2,568.5 L155.8,567.4 L156.4,572.7 L157.0,573.9 L157.6,574.6 L158.2,581.0 L158.8,584.5 L159.4,585.0 L160.0,587.1 L160.6,590.2 L161.2,593.4 L161.8,600.2 L162.4,595.0 L163.0,590.1 L163.6,584.7 L164.2,582.2 L164.8,583.7 L165.4,589.3 L166.0,589.1 L166.6,588.7 L167.2,585.1 L167.8,581.9 L168.4,578.6 L169.0,575.3 L169.6,573.0 L170.2,562.7 L170.8,549.5 L171.4,535.5 L172.0,528.4 L172.6,529.0 L173.2,522.8 L173.8,519.4 L174.4,519.2 L175.0,520.2 L175.6,517.2 L176.2,519.6 L176.8,519.4 L177.4,512.1 L178.0,511.2 L178.6,504.8 L179.2,503.7 L179.8,501.2 L180.4,501.8 L181.0,502.7 L181.6,508.1 L182.2,512.1 L182.8,519.2 L183.4,532.6 L184.0,530.2 L184.6,526.8 L185.2,523.3 L185.8,520.7 L186.4,526.2 L187.0,532.3 L187.6,537.3 L188.2,543.4 L188.8,545.5 L189.4,545.2 L190.0,542.9 L190.6,539.5 L191.2,536.3 L191.8,534.5 L192.4,541.1 L193.0,543.6 L193.6,544.4 L194.2,547.4 L194.8,551.0 L195.4,555.4 L196.0,559.2 L196.6,558.4 L197.2,556.0 L197.8,546.0 L198.4,542.2 L199.0,533.7 L199.6,527.1 L200.2,520.3 L200.8,510.5 L201.4,498.2 L202.0,502.7 L202.6,511.6 L203.2,515.1 L203.8,521.9 L204.4,528.2 L205.0,526.9 L205.6,529.4 L206.2,535.4 L206.8,539.0 L207.4,542.7 L208.0,547.2 L208.6,549.8 L209.2,552.2 L209.8,552.6 L210.4,549.1 L211.0,545.6 L211.6,546.7 L212.2,543.9 L212.8,545.1 L213.4,542.6 L214.0,542.9 L214.6,544.8 L215.2,551.2 L215.8,559.7 L216.4,564.9 L217.0,572.9 L217.6,573.1 L218.2,575.4 L218.8,570.6 L219.4,573.9 L220.0,569.6 L220.6,565.6 L221.2,559.9 L221.8,555.8 L222.4,559.6 L223.0,561.9 L223.6,565.9 L224.2,568.6 L224.8,566.6 L225.4,562.2 L226.0,558.1 L226.6,562.1 L227.2,561.8 L227.8,562.1 L228.4,568.0 L229.0,572.5 L229.6,572.9 L230.2,567.1 L230.8,562.5 L231.4,560.1 L232.0,558.2 L232.6,558.8 L233.2,559.8 L233.8,560.0 L234.4,562.8 L235.0,563.8 L235.6,563.6 L236.2,561.7 L236.8,563.0 L237.4,561.6 L238.0,566.7 L238.6,567.0 L239.2,571.3 L239.8,573.9 L240.4,574.9 L241.0,582.5 L241.6,584.9 L242.2,578.8 L242.8,576.2 L243.4,572.2 L244.0,567.8 L244.6,571.6 L245.2,571.5 L245.8,571.1 L246.4,570.3 L247.0,570.0 L247.6,568.5 L248.2,569.1 L248.8,566.8 L249.4,564.0 L250.0,564.6 L250.6,560.0 L251.2,559.6 L251.8,556.5 L252.4,560.6 L253.0,559.2 L253.6,557.7 L254.2,556.6 L254.8,555.1 L255.4,555.0 L256.0,553.7 L256.6,552.3 L257.2,551.1 L257.8,549.7 L258.4,543.4 L259.0,538.3 L259.6,532.6 L260.2,528.6 L260.8,526.4 L261.4,521.3 L262.0,522.3 L262.6,524.4 L263.2,525.6 L263.8,531.3 L264.4,536.8 L265.0,539.0 L265.6,539.7 L266.2,535.6 L266.8,532.5 L267.4,526.6 L268.0,524.5 L268.6,522.6 L269.2,527.9 L269.8,529.1 L270.4,533.3 L271.0,534.2 L271.6,531.0 L272.2,529.1 L272.8,528.5 L273.4,528.2 L274.0,528.8 L274.6,531.6 L275.2,534.4 L275.8,532.9 L276.4,537.0 L277.0,544.0 L277.6,553.7 L278.2,558.6 L278.8,561.8 L279.4,567.8 L280.0,566.6 L280.6,566.2 L281.2,563.1 L281.8,558.3 L282.4,555.6 L283.0,553.7 L283.6,549.1 L284.2,547.9 L284.8,546.4 L285.4,547.9 L286.0,548.8 L286.6,547.3 L287.2,543.8 L287.8,541.6 L288.4,540.4 L289.0,540.3 L289.6,539.3 L290.2,539.4 L290.8,539.4 L291.4,536.9 L292.0,534.2 L292.6,532.5 L293.2,529.7 L293.8,528.0 L294.4,526.7 L295.0,522.2 L295.6,515.6 L296.2,507.3 L296.8,503.7 L297.4,494.2 L298.0,490.9 L298.6,502.6 L299.2,510.5 L299.8,517.4 L300.4,511.8 L301.0,509.8 L301.6,503.7 L302.2,500.8 L302.8,496.5 L303.4,494.7 L304.0,493.8 L304.6,494.5 L305.2,497.4 L305.8,497.9 L306.4,497.7 L307.0,500.5 L307.6,500.7 L308.2,503.0 L308.8,501.9 L309.4,499.9 L310.0,496.0 L310.6,495.5 L311.2,488.9 L311.8,481.2 L312.4,473.8 L313.0,471.8 L313.6,479.2 L314.2,488.7 L314.8,493.0 L315.4,488.6 L316.0,486.3 L316.6,477.9 L317.2,474.4 L317.8,473.3 L318.4,477.6 L319.0,481.0 L319.6,487.1 L320.2,490.3 L320.8,491.3 L321.4,489.6 L322.0,490.5 L322.6,487.2 L323.2,483.2 L323.8,489.2 L324.4,492.7 L325.0,498.1 L325.6,498.2 L326.2,499.6 L326.8,498.7 L327.4,505.5 L328.0,502.1 L328.6,505.9 L329.2,511.7 L329.8,522.3 L330.4,531.1 L331.0,535.9 L331.6,539.1 L332.2,535.9 L332.8,540.9 L333.4,541.8 L334.0,543.7 L334.6,546.8 L335.2,548.5 L335.8,552.6 L336.4,556.4 L337.0,559.7 L337.6,563.3 L338.2,563.9 L338.8,565.5 L339.4,568.7 L340.0,564.6 L340.6,557.1 L341.2,554.2 L341.8,549.7 L342.4,545.3 L343.0,545.2 L343.6,540.0 L344.2,539.4 L344.8,533.4 L345.4,529.8 L346.0,522.5 L346.6,514.6 L347.2,511.6 L347.8,508.2 L348.4,507.2 L349.0,503.7 L349.6,501.6 L350.2,502.6 L350.8,503.4 L351.4,502.8 L352.0,498.6 L352.6,499.0 L353.2,500.8 L353.8,507.7 L354.4,509.2 L355.0,507.1 L355.6,507.0 L356.2,505.2 L356.8,499.9 L357.4,504.1 L358.0,507.5 L358.6,509.3 L359.2,516.9 L359.8,522.6 L360.4,529.4 L361.0,536.1 L361.6,535.8 L362.2,538.5 L362.8,537.8 L363.4,538.9 L364.0,539.9 L364.6,545.1 L365.2,542.6 L365.8,544.8 L366.4,546.9 L367.0,548.2 L367.6,551.8 L368.2,556.1 L368.8,556.4 L369.4,554.5 L370.0,552.1 L370.6,547.2 L371.2,545.0 L371.8,540.9 L372.4,535.8 L373.0,541.9 L373.6,551.5 L374.2,561.8 L374.8,562.2 L375.4,563.5 L376.0,560.1 L376.6,561.3 L377.2,557.9 L377.8,558.3 L378.4,558.3 L379.0,561.2 L379.6,566.4 L380.2,559.7 L380.8,552.4 L381.4,546.6 L382.0,540.2 L382.6,537.2 L383.2,538.2 L383.8,537.8 L384.4,537.0 L385.0,534.4 L385.6,534.0 L386.2,533.0 L386.8,535.8 L387.4,539.5 L388.0,539.8 L388.6,541.1 L389.2,546.6 L389.8,551.2 L390.4,555.7 L391.0,549.2 L391.6,539.2 L392.2,533.8 L392.8,524.6 L393.4,518.6 L394.0,518.4 L394.6,517.2 L395.2,514.7 L395.8,513.7 L396.4,512.8 L397.0,519.7 L397.6,524.3 L398.2,521.1 L398.8,514.6 L399.4,506.4 L400.0,514.2 L400.6,520.7 L401.2,525.4 L401.8,523.0 L402.4,516.4 L403.0,508.4 L403.6,501.3 L404.2,494.3 L404.8,488.3 L405.4,484.0 L406.0,478.1 L406.6,475.0 L407.2,476.1 L407.8,480.7 L408.4,481.9 L409.0,483.3 L409.6,488.3 L410.2,499.4 L410.8,504.3 L411.4,510.4 L412.0,504.1 L412.6,498.6 L413.2,493.0 L413.8,483.9 L414.4,482.1 L415.0,487.4 L415.6,490.0 L416.2,493.0 L416.8,494.4 L417.4,500.4 L418.0,503.3 L418.6,504.1 L419.2,505.2 L419.8,503.1 L420.4,510.5 L421.0,512.2 L421.6,513.8 L422.2,523.5 L422.8,526.4 L423.4,526.6 L424.0,522.9 L424.6,521.5 L425.2,514.9 L425.8,511.6 L426.4,512.9 L427.0,513.6 L427.6,512.2 L428.2,512.4 L428.8,510.6 L429.4,516.7 L430.0,525.0 L430.6,532.3 L431.2,533.6 L431.8,529.9 L432.4,521.7 L433.0,516.7 L433.6,514.9 L434.2,512.3 L434.8,510.6 L435.4,507.8 L436.0,504.7 L436.6,503.4 L437.2,498.6 L437.8,494.8 L438.4,497.4 L439.0,497.8 L439.6,499.0 L440.2,498.0 L440.8,499.9 L441.4,493.7 L442.0,486.2 L442.6,478.0 L443.2,475.7 L443.8,471.7 L444.4,465.9 L445.0,463.0 L445.6,467.7 L446.2,471.7 L446.8,469.8 L447.4,476.2 L448.0,481.8 L448.6,487.5 L449.2,495.4 L449.8,500.7 L450.4,506.9 L451.0,514.2 L451.6,522.3 L452.2,526.9 L452.8,531.6 L453.4,529.1 L454.0,527.3 L454.6,519.2 L455.2,516.5 L455.8,514.5 L456.4,514.2 L457.0,509.3 L457.6,516.2 L458.2,522.2 L458.8,531.4 L459.4,539.8 L460.0,543.3 L460.6,546.9 L461.2,545.9 L461.8,550.4 L462.4,558.8 L463.0,564.0 L463.6,567.8 L464.2,565.7 L464.8,559.0 L465.4,553.6 L466.0,547.8 L466.6,543.3 L467.2,534.5 L467.8,527.3 L468.4,517.6 L469.0,509.5 L469.6,502.7 L470.2,493.5 L470.8,496.3 L471.4,502.6 L472.0,507.6 L472.6,512.5 L473.2,510.4 L473.8,510.9 L474.4,508.1 L475.0,508.3 L475.6,510.7 L476.2,514.1 L476.8,515.6 L477.4,515.8 L478.0,520.2 L478.6,526.4 L479.2,528.0 L479.8,530.7 L480.4,531.4 L481.0,529.8 L481.6,525.1 L482.2,522.4 L482.8,523.5 L483.4,528.5 L484.0,529.2 L484.6,532.1 L485.2,533.8 L485.8,537.8 L486.4,541.2 L487.0,547.6 L487.6,551.6 L488.2,558.3 L488.8,556.2 L489.4,555.8 L490.0,551.2 L490.6,549.5 L491.2,552.9 L491.8,555.6 L492.4,556.8 L493.0,548.2 L493.6,544.0 L494.2,539.8 L494.8,538.7 L495.4,531.5 L496.0,522.6 L496.6,516.7 L497.2,511.6 L497.8,502.2 L498.4,506.9 L499.0,514.7 L499.6,519.5 L500.2,519.0 L500.8,514.1 L501.4,516.3 L502.0,521.9 L502.6,527.1 L503.2,534.0 L503.8,535.4 L504.4,535.9 L505.0,531.6 L505.6,529.5 L506.2,526.9 L506.8,522.1 L507.4,517.8 L508.0,514.8 L508.6,506.9 L509.2,500.6 L509.8,498.2 L510.4,502.7 L511.0,504.2 L511.6,513.8 L512.2,507.4 L512.8,503.8 L513.4,499.9 L514.0,492.2 L514.6,484.5 L515.2,487.6 L515.8,488.9 L516.4,490.8 L517.0,485.6 L517.6,475.7 L518.2,472.8 L518.8,465.9 L519.4,465.5 L520.0,461.8 L520.6,458.6 L521.2,456.2 L521.8,454.6 L522.4,454.4 L523.0,453.5 L523.6,456.3 L524.2,461.1 L524.8,459.5 L525.4,455.2 L526.0,453.0 L526.6,457.5 L527.2,467.3 L527.8,465.4 L528.4,463.1 L529.0,459.4 L529.6,459.2 L530.2,460.6 L530.8,464.1 L531.4,464.2 L532.0,463.3 L532.6,460.4 L533.2,451.4 L533.8,443.9 L534.4,439.1 L535.0,434.8 L535.6,437.5 L536.2,442.7 L536.8,448.7 L537.4,452.5 L538.0,455.1 L538.6,460.0 L539.2,460.2 L539.8,465.1 L540.4,466.2 L541.0,467.0 L541.6,460.3 L542.2,460.6 L542.8,460.0 L543.4,460.0 L544.0,461.7 L544.6,465.2 L545.2,463.9 L545.8,469.3 L546.4,469.6 L547.0,471.8 L547.6,475.8 L548.2,477.5 L548.8,479.8 L549.4,484.5 L550.0,484.0 L550.6,485.1 L551.2,487.8 L551.8,487.8 L552.4,491.9 L553.0,491.6 L553.6,492.5 L554.2,495.9 L554.8,496.0 L555.4,492.5 L556.0,492.0 L556.6,487.6 L557.2,481.7 L557.8,483.0 L558.4,480.3 L559.0,480.7 L559.6,478.8 L560.2,480.6 L560.8,481.4 L561.4,485.7 L562.0,486.2 L562.6,488.9 L563.2,489.4 L563.8,485.2 L564.4,484.6 L565.0,482.9 L565.6,481.6 L566.2,477.8 L566.8,480.8 L567.4,477.1 L568.0,474.1 L568.6,471.2 L569.2,474.5 L569.8,479.1 L570.4,482.2 L571.0,487.8 L571.6,490.7 L572.2,495.7 L572.8,494.7 L573.4,497.4 L574.0,500.9 L574.6,505.7 L575.2,503.4 L575.8,505.7 L576.4,508.7 L577.0,513.5 L577.6,515.1 L578.2,514.7 L578.8,515.2 L579.4,512.6 L580.0,513.0 L580.6,512.1 L581.2,512.6 L581.8,517.7 L582.4,522.8 L583.0,527.2 L583.6,529.2 L584.2,530.6 L584.8,531.2 L585.4,530.8 L586.0,527.5 L586.6,522.3 L587.2,517.8 L587.8,517.5 L588.4,513.8 L589.0,509.8 L589.6,506.3 L590.2,507.1 L590.8,502.5 L591.4,501.7 L592.0,498.1 L592.6,498.5 L593.2,496.2 L593.8,493.2 L594.4,492.1 L595.0,484.3 L595.6,479.0 L596.2,477.7 L596.8,475.0 L597.4,473.2 L598.0,468.9 L598.6,464.8 L599.2,461.6 L599.8,457.1 L600.4,452.8 L601.0,449.7 L601.6,446.3 L602.2,451.9 L602.8,455.3 L603.4,463.5 L604.0,462.5 L604.6,457.3 L605.2,452.3 L605.8,455.2 L606.4,464.3 L607.0,468.3 L607.6,474.6 L608.2,476.0 L608.8,477.1 L609.4,477.1 L610.0,481.5 L610.6,483.8 L611.2,488.0 L611.8,491.5 L611.9,491.5" stroke="#73BF69" stroke-width="1.1" fill="none" stroke-linejoin="round"/>
<rect x="21" y="659.5" width="16" height="4" rx="2" fill="#73BF69"/>
<text x="45.4" y="666.1" font-size="14" fill="#ccccdc" text-anchor="start" font-weight="normal" >Netspace</text>
<rect x="117" y="659.5" width="16" height="4" rx="2" fill="#F2CC0C"/>
<text x="141.5" y="666.1" font-size="14" fill="#ccccdc" text-anchor="start" font-weight="normal" >7d Average</text>
<rect x="224" y="659.5" width="16" height="4" rx="2" fill="#8AB8FF"/>
<text x="248" y="666.1" font-size="14" fill="#ccccdc" text-anchor="start" font-weight="normal" >30d Average</text>
<line x1="728.2" y1="411.5" x2="728.2" y2="630" stroke="rgba(240,250,255,0.09)" stroke-width="1" />
<line x1="787.1" y1="411.5" x2="787.1" y2="630" stroke="rgba(240,250,255,0.09)" stroke-width="1" />
<line x1="846.0" y1="411.5" x2="846.0" y2="630" stroke="rgba(240,250,255,0.09)" stroke-width="1" />
<line x1="904.9" y1="411.5" x2="904.9" y2="630" stroke="rgba(240,250,255,0.09)" stroke-width="1" />
<line x1="963.8" y1="411.5" x2="963.8" y2="630" stroke="rgba(240,250,255,0.09)" stroke-width="1" />
<line x1="1022.7" y1="411.5" x2="1022.7" y2="630" stroke="rgba(240,250,255,0.09)" stroke-width="1" />
<line x1="1081.6" y1="411.5" x2="1081.6" y2="630" stroke="rgba(240,250,255,0.09)" stroke-width="1" />
<line x1="1140.5" y1="411.5" x2="1140.5" y2="630" stroke="rgba(240,250,255,0.09)" stroke-width="1" />
<line x1="718.5" y1="419.2" x2="1163" y2="419.2" stroke="rgba(240,250,255,0.09)" stroke-width="1" />
<text x="712" y="423.3" font-size="14" fill="#ccccdc" text-anchor="end" font-weight="normal" >2500</text>
<line x1="718.5" y1="460.3" x2="1163" y2="460.3" stroke="rgba(240,250,255,0.09)" stroke-width="1" />
<text x="712" y="464.40000000000003" font-size="14" fill="#ccccdc" text-anchor="end" font-weight="normal" >2450</text>
<line x1="718.5" y1="501.3" x2="1163" y2="501.3" stroke="rgba(240,250,255,0.09)" stroke-width="1" />
<text x="712" y="505.40000000000003" font-size="14" fill="#ccccdc" text-anchor="end" font-weight="normal" >2400</text>
<line x1="718.5" y1="542.3" x2="1163" y2="542.3" stroke="rgba(240,250,255,0.09)" stroke-width="1" />
<text x="712" y="546.4" font-size="14" fill="#ccccdc" text-anchor="end" font-weight="normal" >2350</text>
<line x1="718.5" y1="583.1" x2="1163" y2="583.1" stroke="rgba(240,250,255,0.09)" stroke-width="1" />
<text x="712" y="587.2" font-size="14" fill="#ccccdc" text-anchor="end" font-weight="normal" >2300</text>
<line x1="718.5" y1="624.1" x2="1163" y2="624.1" stroke="rgba(240,250,255,0.09)" stroke-width="1" />
<text x="712" y="628.2" font-size="14" fill="#ccccdc" text-anchor="end" font-weight="normal" >2250</text>
<line x1="1163" y1="410.8" x2="1167" y2="410.8" stroke="rgba(240,250,255,0.09)" stroke-width="1" />
<text x="1173" y="414.90000000000003" font-size="14" fill="#ccccdc" text-anchor="start" font-weight="normal" >300 Mil</text>
<line x1="1163" y1="445.4" x2="1167" y2="445.4" stroke="rgba(240,250,255,0.09)" stroke-width="1" />
<text x="1173" y="449.5" font-size="14" fill="#ccccdc" text-anchor="start" font-weight="normal" >250 Mil</text>
<line x1="1163" y1="481.4" x2="1167" y2="481.4" stroke="rgba(240,250,255,0.09)" stroke-width="1" />
<text x="1173" y="485.5" font-size="14" fill="#ccccdc" text-anchor="start" font-weight="normal" >200 Mil</text>
<line x1="1163" y1="516.8" x2="1167" y2="516.8" stroke="rgba(240,250,255,0.09)" stroke-width="1" />
<text x="1173" y="520.9" font-size="14" fill="#ccccdc" text-anchor="start" font-weight="normal" >150 Mil</text>
<line x1="1163" y1="552.5" x2="1167" y2="552.5" stroke="rgba(240,250,255,0.09)" stroke-width="1" />
<text x="1173" y="556.6" font-size="14" fill="#ccccdc" text-anchor="start" font-weight="normal" >100 Mil</text>
<line x1="1163" y1="587.5" x2="1167" y2="587.5" stroke="rgba(240,250,255,0.09)" stroke-width="1" />
<text x="1173" y="591.6" font-size="14" fill="#ccccdc" text-anchor="start" font-weight="normal" >50 Mil</text>
<line x1="1163" y1="623.1" x2="1167" y2="623.1" stroke="rgba(240,250,255,0.09)" stroke-width="1" />
<text x="1173" y="627.2" font-size="14" fill="#ccccdc" text-anchor="start" font-weight="normal" >0</text>
<text x="728.2" y="643.5" font-size="14" fill="#ccccdc" text-anchor="middle" font-weight="normal" >06/28</text>
<text x="787.1" y="643.5" font-size="14" fill="#ccccdc" text-anchor="middle" font-weight="normal" >07/02</text>
<text x="846.0" y="643.5" font-size="14" fill="#ccccdc" text-anchor="middle" font-weight="normal" >07/06</text>
<text x="904.9" y="643.5" font-size="14" fill="#ccccdc" text-anchor="middle" font-weight="normal" >07/10</text>
<text x="963.8" y="643.5" font-size="14" fill="#ccccdc" text-anchor="middle" font-weight="normal" >07/14</text>
<text x="1022.7" y="643.5" font-size="14" fill="#ccccdc" text-anchor="middle" font-weight="normal" >07/18</text>
<text x="1081.6" y="643.5" font-size="14" fill="#ccccdc" text-anchor="middle" font-weight="normal" >07/22</text>
<text x="1140.5" y="643.5" font-size="14" fill="#ccccdc" text-anchor="middle" font-weight="normal" >07/26</text>
<text x="0" y="0" font-size="14.6" fill="#ccccdc" text-anchor="middle" transform="translate(659,516.5) rotate(-90)">Difficulty</text>
<text x="0" y="0" font-size="14.6" fill="#ccccdc" text-anchor="middle" transform="translate(1240.8,516.5) rotate(90)">Sub-Slot Iterations</text>
<path d="M722,519.5 L1163,519.5" stroke="#F2CC0C" stroke-width="1.3" fill="none" />
<path d="M721.9,578.8 L732.0,578.8 L733.2,527.1 L747.5,527.1 L748.7,540.3 L762.4,540.3 L763.6,578.8 L776.5,578.8 L777.7,591.9 L791.7,591.9 L792.9,605.9 L805.1,605.9 L806.3,527.1 L820.3,527.1 L821.5,540.3 L835.5,540.3 L836.7,591.9 L864.8,591.9 L866.0,578.8 L879.0,578.8 L880.2,540.3 L893.8,540.3 L895.0,553.4 L908.0,553.4 L909.2,500.9 L922.8,500.9 L924.0,514.0 L938.3,514.0 L939.5,566.5 L952.5,566.5 L953.7,527.1 L967.3,527.1 L968.5,578.8 L981.5,578.8 L982.7,540.3 L996.3,540.3 L997.5,514.0 L1011.1,514.0 L1012.3,527.1 L1026.0,527.1 L1027.2,487.8 L1040.5,487.8 L1041.7,566.5 L1055.3,566.5 L1056.5,540.3 L1083.6,540.3 L1084.8,500.9 L1098.4,500.9 L1099.6,435.3 L1113.3,435.3 L1114.5,500.9 L1143.3,500.9 L1144.5,540.3 L1157.4,540.3 L1158.6,461.5 L1162.9,461.5" stroke="#73BF69" stroke-width="1.1" fill="none" />
<rect x="652" y="659.5" width="16" height="4" rx="2" fill="#73BF69"/>
<text x="676.6" y="666.1" font-size="14" fill="#ccccdc" text-anchor="start" font-weight="normal" >Difficulty</text>
<rect x="1129" y="659.5" width="16" height="4" rx="2" fill="#F2CC0C"/>
<text x="1153.7" y="666.1" font-size="14" fill="#ccccdc" text-anchor="start" font-weight="normal" >Sub Slot Iters</text>
<line x1="1354.6" y1="411.5" x2="1354.6" y2="630" stroke="rgba(240,250,255,0.09)" stroke-width="1" />
<line x1="1421.9" y1="411.5" x2="1421.9" y2="630" stroke="rgba(240,250,255,0.09)" stroke-width="1" />
<line x1="1489.2" y1="411.5" x2="1489.2" y2="630" stroke="rgba(240,250,255,0.09)" stroke-width="1" />
<line x1="1556.5" y1="411.5" x2="1556.5" y2="630" stroke="rgba(240,250,255,0.09)" stroke-width="1" />
<line x1="1623.8" y1="411.5" x2="1623.8" y2="630" stroke="rgba(240,250,255,0.09)" stroke-width="1" />
<line x1="1691.1" y1="411.5" x2="1691.1" y2="630" stroke="rgba(240,250,255,0.09)" stroke-width="1" />
<line x1="1758.4" y1="411.5" x2="1758.4" y2="630" stroke="rgba(240,250,255,0.09)" stroke-width="1" />
<line x1="1825.7" y1="411.5" x2="1825.7" y2="630" stroke="rgba(240,250,255,0.09)" stroke-width="1" />
<line x1="1343" y1="435.1" x2="1851.6" y2="435.1" stroke="rgba(240,250,255,0.09)" stroke-width="1" />
<text x="1335.4" y="439.5" font-size="14.7" fill="#ccccdc" text-anchor="end" font-weight="normal" >4000000</text>
<line x1="1343" y1="494" x2="1851.6" y2="494" stroke="rgba(240,250,255,0.09)" stroke-width="1" />
<text x="1335.4" y="498.4" font-size="14.7" fill="#ccccdc" text-anchor="end" font-weight="normal" >3950000</text>
<line x1="1343" y1="552.7" x2="1851.6" y2="552.7" stroke="rgba(240,250,255,0.09)" stroke-width="1" />
<text x="1335.4" y="557.1" font-size="14.7" fill="#ccccdc" text-anchor="end" font-weight="normal" >3900000</text>
<line x1="1343" y1="611.6" x2="1851.6" y2="611.6" stroke="rgba(240,250,255,0.09)" stroke-width="1" />
<text x="1335.4" y="616.0" font-size="14.7" fill="#ccccdc" text-anchor="end" font-weight="normal" >3850000</text>
<line x1="1851.6" y1="442.6" x2="1855.6" y2="442.6" stroke="rgba(240,250,255,0.09)" stroke-width="1" />
<text x="1860.4" y="446.70000000000005" font-size="14" fill="#ccccdc" text-anchor="start" font-weight="normal" >1.2</text>
<line x1="1851.6" y1="482.5" x2="1855.6" y2="482.5" stroke="rgba(240,250,255,0.09)" stroke-width="1" />
<text x="1860.4" y="486.6" font-size="14" fill="#ccccdc" text-anchor="start" font-weight="normal" >1.1</text>
<line x1="1851.6" y1="522" x2="1855.6" y2="522" stroke="rgba(240,250,255,0.09)" stroke-width="1" />
<text x="1860.4" y="526.1" font-size="14" fill="#ccccdc" text-anchor="start" font-weight="normal" >1</text>
<line x1="1851.6" y1="562" x2="1855.6" y2="562" stroke="rgba(240,250,255,0.09)" stroke-width="1" />
<text x="1860.4" y="566.1" font-size="14" fill="#ccccdc" text-anchor="start" font-weight="normal" >0.9</text>
<line x1="1851.6" y1="602" x2="1855.6" y2="602" stroke="rgba(240,250,255,0.09)" stroke-width="1" />
<text x="1860.4" y="606.1" font-size="14" fill="#ccccdc" text-anchor="start" font-weight="normal" >0.8</text>
<text x="1354.6" y="643.5" font-size="14" fill="#ccccdc" text-anchor="middle" font-weight="normal" >06/28</text>
<text x="1421.9" y="643.5" font-size="14" fill="#ccccdc" text-anchor="middle" font-weight="normal" >07/02</text>
<text x="1489.2" y="643.5" font-size="14" fill="#ccccdc" text-anchor="middle" font-weight="normal" >07/06</text>
<text x="1556.5" y="643.5" font-size="14" fill="#ccccdc" text-anchor="middle" font-weight="normal" >07/10</text>
<text x="1623.8" y="643.5" font-size="14" fill="#ccccdc" text-anchor="middle" font-weight="normal" >07/14</text>
<text x="1691.1" y="643.5" font-size="14" fill="#ccccdc" text-anchor="middle" font-weight="normal" >07/18</text>
<text x="1758.4" y="643.5" font-size="14" fill="#ccccdc" text-anchor="middle" font-weight="normal" >07/22</text>
<text x="1825.7" y="643.5" font-size="14" fill="#ccccdc" text-anchor="middle" font-weight="normal" >07/26</text>
<path d="M1346.8,624 L1346.8,596.8 L1851.6,433.7 L1851.6,624 Z" fill="#73BF69"/>
<path d="M1346.8,485.3 L1347.5,584.1 L1348.2,517.1 L1349.0,544.8 L1349.7,534.8 L1350.4,529.6 L1351.1,565.2 L1351.9,534.1 L1352.6,531.8 L1353.3,433.9 L1354.0,516.8 L1354.7,529.6 L1355.5,533.2 L1356.2,455.4 L1356.9,555.0 L1357.6,536.3 L1358.4,516.3 L1359.1,536.1 L1359.8,500.7 L1360.5,528.6 L1361.2,518.5 L1362.0,481.0 L1362.7,507.3 L1363.4,532.6 L1364.1,523.4 L1364.9,510.6 L1365.6,473.8 L1366.3,525.4 L1367.0,526.2 L1367.7,490.8 L1368.5,544.4 L1369.2,529.0 L1369.9,496.0 L1370.6,507.5 L1371.4,516.1 L1372.1,512.2 L1372.8,594.9 L1373.5,507.7 L1374.2,563.5 L1375.0,578.4 L1375.7,530.4 L1376.4,506.9 L1377.1,531.4 L1377.9,537.8 L1378.6,509.8 L1379.3,510.4 L1380.0,479.1 L1380.7,509.1 L1381.5,523.5 L1382.2,497.1 L1382.9,526.9 L1383.6,545.6 L1384.4,498.6 L1385.1,493.0 L1385.8,515.2 L1386.5,540.8 L1387.2,522.2 L1388.0,587.1 L1388.7,508.4 L1389.4,512.3 L1390.1,565.7 L1390.9,521.9 L1391.6,543.7 L1392.3,508.0 L1393.0,583.6 L1393.7,552.6 L1394.5,507.6 L1395.2,491.7 L1395.9,576.6 L1396.6,536.3 L1397.4,511.4 L1398.1,532.5 L1398.8,486.8 L1399.5,556.0 L1400.2,513.0 L1401.0,537.7 L1401.7,482.6 L1402.4,523.9 L1403.1,525.2 L1403.9,558.1 L1404.6,569.1 L1405.3,508.4 L1406.0,521.7 L1406.7,513.6 L1407.5,540.4 L1408.2,564.0 L1408.9,564.7 L1409.6,555.9 L1410.4,492.2 L1411.1,557.4 L1411.8,524.7 L1412.5,522.1 L1413.2,508.0 L1414.0,497.7 L1414.7,539.3 L1415.4,545.3 L1416.1,573.9 L1416.9,474.7 L1417.6,493.5 L1418.3,512.8 L1419.0,531.2 L1419.7,520.6 L1420.5,534.5 L1421.2,512.5 L1421.9,552.5 L1422.6,522.3 L1423.4,516.2 L1424.1,501.2 L1424.8,498.2 L1425.5,444.4 L1426.2,451.4 L1427.0,455.4 L1427.7,555.5 L1428.4,594.6 L1429.1,522.8 L1429.9,501.8 L1430.6,581.8 L1431.3,505.2 L1432.0,501.9 L1432.7,432.0 L1433.5,555.6 L1434.2,544.2 L1434.9,584.0 L1435.6,512.9 L1436.3,480.4 L1437.1,538.4 L1437.8,441.5 L1438.5,539.4 L1439.2,496.8 L1440.0,517.5 L1440.7,497.8 L1441.4,543.3 L1442.1,515.1 L1442.8,529.9 L1443.6,466.8 L1444.3,488.2 L1445.0,511.9 L1445.7,525.4 L1446.5,505.8 L1447.2,539.9 L1447.9,553.1 L1448.6,515.8 L1449.3,467.0 L1450.1,534.8 L1450.8,547.6 L1451.5,556.8 L1452.2,555.8 L1453.0,514.1 L1453.7,508.1 L1454.4,523.7 L1455.1,507.8 L1455.8,511.3 L1456.6,517.2 L1457.3,563.3 L1458.0,581.2 L1458.7,517.5 L1459.5,544.3 L1460.2,535.5 L1460.9,540.3 L1461.6,525.1 L1462.3,493.5 L1463.1,528.6 L1463.8,520.4 L1464.5,506.3 L1465.2,507.6 L1466.0,479.1 L1466.7,570.7 L1467.4,502.0 L1468.1,539.9 L1468.8,574.2 L1469.6,500.0 L1470.3,491.3 L1471.0,498.9 L1471.7,522.2 L1472.5,488.7 L1473.2,526.2 L1473.9,535.5 L1474.6,516.4 L1475.3,543.3 L1476.1,468.3 L1476.8,492.3 L1477.5,467.1 L1478.2,509.8 L1479.0,510.8 L1479.7,499.9 L1480.4,484.2 L1481.1,514.7 L1481.8,488.1 L1482.6,505.4 L1483.3,465.8 L1484.0,526.5 L1484.7,459.1 L1485.5,454.2 L1486.2,555.3 L1486.9,542.7 L1487.6,562.7 L1488.3,518.2 L1489.1,490.4 L1489.8,518.2 L1490.5,502.8 L1491.2,476.5 L1492.0,508.3 L1492.7,514.6 L1493.4,517.5 L1494.1,541.5 L1494.8,484.7 L1495.6,551.8 L1496.3,487.7 L1497.0,512.3 L1497.7,505.7 L1498.5,541.1 L1499.2,563.9 L1499.9,525.6 L1500.6,549.7 L1501.3,538.2 L1502.1,525.0 L1502.8,524.4 L1503.5,524.6 L1504.2,549.9 L1505.0,535.3 L1505.7,578.1 L1506.4,524.7 L1507.1,551.6 L1507.8,486.4 L1508.6,473.2 L1509.3,557.9 L1510.0,496.6 L1510.7,503.0 L1511.5,520.6 L1512.2,490.8 L1512.9,520.6 L1513.6,544.5 L1514.3,518.3 L1515.1,512.4 L1515.8,508.8 L1516.5,542.3 L1517.2,499.3 L1518.0,451.2 L1518.7,537.6 L1519.4,530.7 L1520.1,520.4 L1520.8,528.7 L1521.6,476.7 L1522.3,522.4 L1523.0,548.3 L1523.7,543.1 L1524.5,523.8 L1525.2,469.2 L1525.9,519.2 L1526.6,499.1 L1527.3,497.2 L1528.1,506.9 L1528.8,454.1 L1529.5,511.9 L1530.2,482.5 L1531.0,507.4 L1531.7,490.1 L1532.4,534.4 L1533.1,458.1 L1533.8,445.5 L1534.6,512.7 L1535.3,534.9 L1536.0,532.6 L1536.7,502.9 L1537.5,498.3 L1538.2,497.0 L1538.9,484.0 L1539.6,496.2 L1540.3,518.3 L1541.1,495.6 L1541.8,493.5 L1542.5,517.8 L1543.2,493.3 L1544.0,483.6 L1544.7,507.8 L1545.4,527.0 L1546.1,504.9 L1546.8,475.2 L1547.6,538.6 L1548.3,516.5 L1549.0,519.6 L1549.7,483.3 L1550.5,554.2 L1551.2,499.2 L1551.9,469.6 L1552.6,543.5 L1553.3,488.5 L1554.1,510.0 L1554.8,543.6 L1555.5,533.3 L1556.2,586.4 L1557.0,545.7 L1557.7,481.0 L1558.4,554.0 L1559.1,484.3 L1559.8,527.2 L1560.6,495.9 L1561.3,525.3 L1562.0,581.9 L1562.7,535.4 L1563.5,511.1 L1564.2,543.2 L1564.9,545.3 L1565.6,500.9 L1566.3,529.3 L1567.1,562.2 L1567.8,538.2 L1568.5,502.4 L1569.2,532.4 L1570.0,497.2 L1570.7,484.8 L1571.4,513.2 L1572.1,544.4 L1572.8,593.7 L1573.6,515.3 L1574.3,499.1 L1575.0,518.5 L1575.7,515.6 L1576.5,545.4 L1577.2,523.3 L1577.9,542.6 L1578.6,538.1 L1579.3,445.5 L1580.1,552.2 L1580.8,517.2 L1581.5,534.4 L1582.2,530.1 L1583.0,489.5 L1583.7,509.2 L1584.4,439.0 L1585.1,458.8 L1585.8,530.6 L1586.6,502.8 L1587.3,518.8 L1588.0,550.7 L1588.7,511.6 L1589.5,551.1 L1590.2,600.0 L1590.9,508.9 L1591.6,542.7 L1592.3,481.2 L1593.1,529.3 L1593.8,553.5 L1594.5,487.7 L1595.2,546.5 L1596.0,503.5 L1596.7,475.1 L1597.4,505.8 L1598.1,503.4 L1598.8,507.4 L1599.6,491.2 L1600.3,539.5 L1601.0,503.1 L1601.7,511.7 L1602.4,476.8 L1603.2,534.8 L1603.9,543.1 L1604.6,494.2 L1605.3,520.6 L1606.1,506.1 L1606.8,506.4 L1607.5,486.4 L1608.2,535.6 L1608.9,536.9 L1609.7,600.0 L1610.4,553.4 L1611.1,495.6 L1611.8,546.7 L1612.6,542.1 L1613.3,452.3 L1614.0,497.4 L1614.7,504.1 L1615.4,531.5 L1616.2,485.4 L1616.9,501.8 L1617.6,484.9 L1618.3,525.1 L1619.1,474.5 L1619.8,505.5 L1620.5,522.9 L1621.2,529.3 L1621.9,523.4 L1622.7,494.3 L1623.4,518.4 L1624.1,484.8 L1624.8,490.7 L1625.6,480.3 L1626.3,503.1 L1627.0,519.1 L1627.7,562.8 L1628.4,521.7 L1629.2,518.5 L1629.9,527.2 L1630.6,516.2 L1631.3,544.8 L1632.1,543.8 L1632.8,546.8 L1633.5,490.0 L1634.2,516.8 L1634.9,520.3 L1635.7,545.9 L1636.4,512.2 L1637.1,471.4 L1637.8,487.6 L1638.6,519.3 L1639.3,480.0 L1640.0,480.3 L1640.7,493.5 L1641.4,498.1 L1642.2,486.8 L1642.9,497.4 L1643.6,483.2 L1644.3,519.1 L1645.1,471.9 L1645.8,505.9 L1646.5,465.4 L1647.2,567.8 L1647.9,511.2 L1648.7,504.8 L1649.4,538.1 L1650.1,519.0 L1650.8,518.3 L1651.6,523.5 L1652.3,542.9 L1653.0,530.5 L1653.7,490.5 L1654.4,489.4 L1655.2,522.7 L1655.9,518.6 L1656.6,511.1 L1657.3,485.4 L1658.1,540.7 L1658.8,540.5 L1659.5,495.6 L1660.2,534.8 L1660.9,530.4 L1661.7,518.0 L1662.4,511.9 L1663.1,544.0 L1663.8,505.4 L1664.6,564.3 L1665.3,501.0 L1666.0,557.1 L1666.7,552.1 L1667.4,519.2 L1668.2,541.2 L1668.9,542.6 L1669.6,537.0 L1670.3,510.2 L1671.1,520.2 L1671.8,510.5 L1672.5,480.7 L1673.2,533.8 L1673.9,531.4 L1674.7,534.0 L1675.4,485.9 L1676.1,493.9 L1676.8,485.1 L1677.6,504.9 L1678.3,509.3 L1679.0,490.8 L1679.7,521.9 L1680.4,490.1 L1681.2,495.1 L1681.9,537.0 L1682.6,520.1 L1683.3,513.7 L1684.1,474.2 L1684.8,451.9 L1685.5,521.6 L1686.2,523.4 L1686.9,577.2 L1687.7,520.8 L1688.4,459.1 L1689.1,551.2 L1689.8,503.5 L1690.6,556.3 L1691.3,526.1 L1692.0,522.1 L1692.7,563.4 L1693.4,515.4 L1694.2,510.3 L1694.9,570.0 L1695.6,564.5 L1696.3,507.0 L1697.1,510.2 L1697.8,530.2 L1698.5,506.7 L1699.2,495.7 L1699.9,495.4 L1700.7,476.0 L1701.4,492.9 L1702.1,460.0 L1702.8,467.8 L1703.6,487.3 L1704.3,480.9 L1705.0,470.1 L1705.7,487.7 L1706.4,537.6 L1707.2,489.4 L1707.9,510.0 L1708.6,481.1 L1709.3,519.7 L1710.1,502.6 L1710.8,506.5 L1711.5,472.3 L1712.2,509.4 L1712.9,516.7 L1713.7,507.5 L1714.4,532.4 L1715.1,520.8 L1715.8,520.8 L1716.6,520.0 L1717.3,472.2 L1718.0,531.9 L1718.7,522.9 L1719.4,528.2 L1720.2,506.2 L1720.9,550.1 L1721.6,551.3 L1722.3,527.1 L1723.1,509.8 L1723.8,528.5 L1724.5,548.7 L1725.2,557.9 L1725.9,515.1 L1726.7,491.5 L1727.4,461.6 L1728.1,514.0 L1728.8,503.6 L1729.6,535.9 L1730.3,518.2 L1731.0,519.4 L1731.7,489.9 L1732.4,502.8 L1733.2,532.9 L1733.9,476.2 L1734.6,467.3 L1735.3,516.6 L1736.1,507.5 L1736.8,517.9 L1737.5,497.1 L1738.2,550.8 L1738.9,474.3 L1739.7,519.4 L1740.4,488.4 L1741.1,518.4 L1741.8,534.0 L1742.6,527.6 L1743.3,501.8 L1744.0,546.9 L1744.7,529.3 L1745.4,528.7 L1746.2,566.8 L1746.9,501.5 L1747.6,513.7 L1748.3,533.8 L1749.1,505.5 L1749.8,580.5 L1750.5,518.9 L1751.2,469.6 L1751.9,495.2 L1752.7,577.5 L1753.4,597.4 L1754.1,545.2 L1754.8,498.1 L1755.6,532.6 L1756.3,521.0 L1757.0,497.7 L1757.7,522.3 L1758.4,491.6 L1759.2,485.3 L1759.9,490.0 L1760.6,499.5 L1761.3,532.6 L1762.1,510.3 L1762.8,542.4 L1763.5,494.5 L1764.2,463.1 L1764.9,590.4 L1765.7,574.1 L1766.4,533.3 L1767.1,573.0 L1767.8,485.9 L1768.5,496.1 L1769.3,570.0 L1770.0,538.5 L1770.7,481.8 L1771.4,540.4 L1772.2,486.1 L1772.9,465.8 L1773.6,481.0 L1774.3,479.9 L1775.0,484.2 L1775.8,490.9 L1776.5,538.4 L1777.2,509.9 L1777.9,519.9 L1778.7,511.4 L1779.4,487.9 L1780.1,516.0 L1780.8,529.9 L1781.5,532.2 L1782.3,511.5 L1783.0,485.7 L1783.7,530.2 L1784.4,485.7 L1785.2,497.6 L1785.9,510.9 L1786.6,542.2 L1787.3,496.6 L1788.0,482.6 L1788.8,543.7 L1789.5,482.0 L1790.2,473.3 L1790.9,500.5 L1791.7,508.1 L1792.4,466.2 L1793.1,498.4 L1793.8,545.9 L1794.5,518.6 L1795.3,531.3 L1796.0,527.6 L1796.7,590.5 L1797.4,497.3 L1798.2,529.0 L1798.9,510.3 L1799.6,516.3 L1800.3,495.5 L1801.0,519.8 L1801.8,538.8 L1802.5,508.0 L1803.2,487.3 L1803.9,523.1 L1804.7,481.5 L1805.4,511.3 L1806.1,524.7 L1806.8,478.5 L1807.5,538.5 L1808.3,496.7 L1809.0,532.1 L1809.7,512.7 L1810.4,555.6 L1811.2,551.7 L1811.9,501.3 L1812.6,526.6 L1813.3,530.4 L1814.0,542.3 L1814.8,519.8 L1815.5,553.9 L1816.2,546.5 L1816.9,526.6 L1817.7,540.6 L1818.4,533.5 L1819.1,521.1 L1819.8,522.6 L1820.5,530.0 L1821.3,479.8 L1822.0,502.1 L1822.7,495.2 L1823.4,522.4 L1824.2,536.7 L1824.9,562.5 L1825.6,536.6 L1826.3,574.2 L1827.0,533.3 L1827.8,500.9 L1828.5,473.4 L1829.2,485.4 L1829.9,532.2 L1830.7,498.4 L1831.4,538.9 L1832.1,497.9 L1832.8,522.0 L1833.5,499.7 L1834.3,453.9 L1835.0,486.4 L1835.7,447.1 L1836.4,500.0 L1837.2,513.5 L1837.9,472.3 L1838.6,462.8 L1839.3,526.8 L1840.0,522.4 L1840.8,554.3 L1841.5,532.0 L1842.2,468.8 L1842.9,530.7 L1843.7,543.9 L1844.4,559.5 L1845.1,521.4 L1845.8,439.1 L1846.5,514.6 L1847.3,531.3 L1848.0,572.0 L1848.7,491.5 L1849.4,536.0 L1850.2,532.1 L1850.9,504.1 L1851.6,568.3" stroke="#F2CC0C" stroke-width="1.1" fill="none" />
<rect x="1282" y="659.5" width="16" height="4" rx="2" fill="#73BF69"/>
<text x="1306" y="666.1" font-size="14" fill="#ccccdc" text-anchor="start" font-weight="normal" >Height</text>
<rect x="1683" y="659.5" width="16" height="4" rx="2" fill="#F2CC0C"/>
<text x="1707.4" y="666.1" font-size="14" fill="#ccccdc" text-anchor="start" font-weight="normal" >Blocks per 18.75 seconds</text>
<text x="16.23" y="715.2" font-size="16" fill="#ccccdc" font-weight="normal" letter-spacing="0.510" stroke="#ccccdc" stroke-width="0.45" >Compact / Uncompact Blocks</text>
<g stroke="#9fa0aa" fill="none"><circle cx="265.4" cy="709.2" r="6.7" stroke-width="1.3"/><line x1="265.4" y1="709.3000000000001" x2="265.4" y2="712.7" stroke-width="1.25" stroke-linecap="round"/></g><circle cx="265.4" cy="706.7" r="0.85" fill="#9fa0aa"/>
<line x1="92.4" y1="745.5" x2="92.4" y2="962" stroke="rgba(240,250,255,0.09)" stroke-width="1" />
<line x1="155.2" y1="745.5" x2="155.2" y2="962" stroke="rgba(240,250,255,0.09)" stroke-width="1" />
<line x1="217.3" y1="745.5" x2="217.3" y2="962" stroke="rgba(240,250,255,0.09)" stroke-width="1" />
<line x1="280.1" y1="745.5" x2="280.1" y2="962" stroke="rgba(240,250,255,0.09)" stroke-width="1" />
<line x1="342.3" y1="745.5" x2="342.3" y2="962" stroke="rgba(240,250,255,0.09)" stroke-width="1" />
<line x1="405.4" y1="745.5" x2="405.4" y2="962" stroke="rgba(240,250,255,0.09)" stroke-width="1" />
<line x1="467.2" y1="745.5" x2="467.2" y2="962" stroke="rgba(240,250,255,0.09)" stroke-width="1" />
<line x1="530.4" y1="745.5" x2="530.4" y2="962" stroke="rgba(240,250,255,0.09)" stroke-width="1" />
<line x1="80.6" y1="783" x2="553.6" y2="783" stroke="rgba(240,250,255,0.09)" stroke-width="1" />
<text x="74.6" y="787.4" font-size="14.7" fill="#ccccdc" text-anchor="end" font-weight="normal" >2808000</text>
<line x1="80.6" y1="838" x2="553.6" y2="838" stroke="rgba(240,250,255,0.09)" stroke-width="1" />
<text x="74.6" y="842.4" font-size="14.7" fill="#ccccdc" text-anchor="end" font-weight="normal" >2807000</text>
<line x1="80.6" y1="892" x2="553.6" y2="892" stroke="rgba(240,250,255,0.09)" stroke-width="1" />
<text x="74.6" y="896.4" font-size="14.7" fill="#ccccdc" text-anchor="end" font-weight="normal" >2806000</text>
<line x1="80.6" y1="947" x2="553.6" y2="947" stroke="rgba(240,250,255,0.09)" stroke-width="1" />
<text x="74.6" y="951.4" font-size="14.7" fill="#ccccdc" text-anchor="end" font-weight="normal" >2805000</text>
<line x1="553.6" y1="757.2" x2="557.6" y2="757.2" stroke="rgba(240,250,255,0.09)" stroke-width="1" />
<text x="564.3" y="761.6" font-size="14.7" fill="#ccccdc" text-anchor="start" font-weight="normal" >1200000</text>
<line x1="553.6" y1="819.4" x2="557.6" y2="819.4" stroke="rgba(240,250,255,0.09)" stroke-width="1" />
<text x="564.3" y="823.8" font-size="14.7" fill="#ccccdc" text-anchor="start" font-weight="normal" >1150000</text>
<line x1="553.6" y1="882.5" x2="557.6" y2="882.5" stroke="rgba(240,250,255,0.09)" stroke-width="1" />
<text x="564.3" y="886.9" font-size="14.7" fill="#ccccdc" text-anchor="start" font-weight="normal" >1100000</text>
<line x1="553.6" y1="944.3" x2="557.6" y2="944.3" stroke="rgba(240,250,255,0.09)" stroke-width="1" />
<text x="564.3" y="948.6999999999999" font-size="14.7" fill="#ccccdc" text-anchor="start" font-weight="normal" >1050000</text>
<path d="M85.7,936 L553.6,766.6" stroke="#F2CC0C" stroke-width="1.2" fill="none" />
<path d="M85.7,924.8 L86.6,924.8 L87.6,924.5 L88.5,924.2 L89.5,924.4 L90.4,923.5 L91.3,923.3 L92.3,923.1 L93.2,922.7 L94.1,922.5 L95.1,922.3 L96.0,921.4 L97.0,920.7 L97.9,920.5 L98.8,919.8 L99.8,919.1 L100.7,919.1 L101.6,918.5 L102.6,918.0 L103.5,917.8 L104.5,917.8 L105.4,917.9 L106.3,917.9 L107.3,917.8 L108.2,917.7 L109.1,917.3 L110.1,931.0 L111.0,917.1 L112.0,917.0 L112.9,916.4 L113.8,915.9 L114.8,915.5 L115.7,914.9 L116.6,915.0 L117.6,914.6 L118.5,913.9 L119.5,913.3 L120.4,912.1 L121.3,912.2 L122.3,912.3 L123.2,912.0 L124.1,912.7 L125.1,912.6 L126.0,912.3 L127.0,912.4 L127.9,911.9 L128.8,910.9 L129.8,910.6 L130.7,910.4 L131.6,909.2 L132.6,909.4 L133.5,908.8 L134.5,908.6 L135.4,908.7 L136.3,908.3 L137.3,908.1 L138.2,907.3 L139.1,907.3 L140.1,907.0 L141.0,906.7 L142.0,906.5 L142.9,906.4 L143.8,906.3 L144.8,905.8 L145.7,905.8 L146.6,905.6 L147.6,905.7 L148.5,904.9 L149.5,904.7 L150.4,904.1 L151.3,903.2 L152.3,903.0 L153.2,902.9 L154.2,902.0 L155.1,901.9 L156.0,902.3 L157.0,901.1 L157.9,901.1 L158.8,900.2 L159.8,899.5 L160.7,900.2 L161.7,900.7 L162.6,900.2 L163.5,899.6 L164.5,899.0 L165.4,898.6 L166.3,899.0 L167.3,898.6 L168.2,898.2 L169.2,897.3 L170.1,896.8 L171.0,896.5 L172.0,896.2 L172.9,896.0 L173.8,895.8 L174.8,895.6 L175.7,894.8 L176.7,894.2 L177.6,894.3 L178.5,894.0 L179.5,893.6 L180.4,893.9 L181.3,893.4 L182.3,893.8 L183.2,894.0 L184.2,893.1 L185.1,892.2 L186.0,891.6 L187.0,892.1 L187.9,891.7 L188.8,891.6 L189.8,891.1 L190.7,889.6 L191.7,889.5 L192.6,889.3 L193.5,888.9 L194.5,889.2 L195.4,889.0 L196.3,889.1 L197.3,888.5 L198.2,888.0 L199.2,887.0 L200.1,885.9 L201.0,886.0 L202.0,885.4 L202.9,885.9 L203.8,886.3 L204.8,886.1 L205.7,886.3 L206.7,886.1 L207.6,885.6 L208.5,884.6 L209.5,883.8 L210.4,883.0 L211.3,882.4 L212.3,882.1 L213.2,882.0 L214.2,881.9 L215.1,881.9 L216.0,881.1 L217.0,890.8 L217.9,880.5 L218.8,880.6 L219.8,881.1 L220.7,880.6 L221.7,880.0 L222.6,880.0 L223.5,879.8 L224.5,880.2 L225.4,880.9 L226.4,879.6 L227.3,879.2 L228.2,878.4 L229.2,877.6 L230.1,877.8 L231.0,877.4 L232.0,877.0 L232.9,876.0 L233.9,875.5 L234.8,874.8 L235.7,874.5 L236.7,874.5 L237.6,874.5 L238.5,874.7 L239.5,874.4 L240.4,874.4 L241.4,873.9 L242.3,873.2 L243.2,872.7 L244.2,872.1 L245.1,871.9 L246.0,871.7 L247.0,871.7 L247.9,871.1 L248.9,870.9 L249.8,870.4 L250.7,869.7 L251.7,869.7 L252.6,868.9 L253.5,869.0 L254.5,868.7 L255.4,868.1 L256.4,867.7 L257.3,867.8 L258.2,867.7 L259.2,867.3 L260.1,867.3 L261.0,866.1 L262.0,866.3 L262.9,865.9 L263.9,865.8 L264.8,866.1 L265.7,864.8 L266.7,865.1 L267.6,864.9 L268.5,864.6 L269.5,864.8 L270.4,864.8 L271.4,864.2 L272.3,863.8 L273.2,863.4 L274.2,863.0 L275.1,862.3 L276.0,862.2 L277.0,861.8 L277.9,860.9 L278.9,861.0 L279.8,861.0 L280.7,861.2 L281.7,861.0 L282.6,860.9 L283.5,859.9 L284.5,859.2 L285.4,859.1 L286.4,857.8 L287.3,857.7 L288.2,857.1 L289.2,856.6 L290.1,856.5 L291.1,855.7 L292.0,855.4 L292.9,855.6 L293.9,856.3 L294.8,856.5 L295.7,856.8 L296.7,856.2 L297.6,854.7 L298.6,854.5 L299.5,853.9 L300.4,853.6 L301.4,854.0 L302.3,853.8 L303.2,853.1 L304.2,852.5 L305.1,852.0 L306.1,851.4 L307.0,851.3 L307.9,851.8 L308.9,852.1 L309.8,851.7 L310.7,851.8 L311.7,851.5 L312.6,850.8 L313.6,851.0 L314.5,850.3 L315.4,850.0 L316.4,850.1 L317.3,849.7 L318.2,849.3 L319.2,849.0 L320.1,848.4 L321.1,848.0 L322.0,847.7 L322.9,847.7 L323.9,846.6 L324.8,846.3 L325.7,846.2 L326.7,845.0 L327.6,845.5 L328.6,845.1 L329.5,844.5 L330.4,844.7 L331.4,843.9 L332.3,842.9 L333.2,842.8 L334.2,842.4 L335.1,842.4 L336.1,842.8 L337.0,842.8 L337.9,842.5 L338.9,842.0 L339.8,842.0 L340.7,841.8 L341.7,847.4 L342.6,841.4 L343.6,840.3 L344.5,839.8 L345.4,839.9 L346.4,839.5 L347.3,839.5 L348.2,839.5 L349.2,838.6 L350.1,838.3 L351.1,837.9 L352.0,837.6 L352.9,836.9 L353.9,837.0 L354.8,836.7 L355.8,835.9 L356.7,836.0 L357.6,835.2 L358.6,835.1 L359.5,834.9 L360.4,834.8 L361.4,835.9 L362.3,835.1 L363.3,835.3 L364.2,834.8 L365.1,833.4 L366.1,832.9 L367.0,832.1 L367.9,832.1 L368.9,831.7 L369.8,832.6 L370.8,832.4 L371.7,832.0 L372.6,832.7 L373.6,831.6 L374.5,831.3 L375.4,830.9 L376.4,829.7 L377.3,829.9 L378.3,830.0 L379.2,829.4 L380.1,829.2 L381.1,829.5 L382.0,829.6 L382.9,828.7 L383.9,828.3 L384.8,826.8 L385.8,826.3 L386.7,826.9 L387.6,827.2 L388.6,827.5 L389.5,827.3 L390.4,827.1 L391.4,826.2 L392.3,825.7 L393.3,825.5 L394.2,825.3 L395.1,824.9 L396.1,824.9 L397.0,824.2 L397.9,823.7 L398.9,823.3 L399.8,822.4 L400.8,821.8 L401.7,820.6 L402.6,820.9 L403.6,820.9 L404.5,820.8 L405.4,821.7 L406.4,821.2 L407.3,820.9 L408.3,819.8 L409.2,819.1 L410.1,818.8 L411.1,818.9 L412.0,820.0 L412.9,820.2 L413.9,819.4 L414.8,817.8 L415.8,817.1 L416.7,816.4 L417.6,816.7 L418.6,817.1 L419.5,816.7 L420.5,815.9 L421.4,815.4 L422.3,815.0 L423.3,814.7 L424.2,815.1 L425.1,814.6 L426.1,814.5 L427.0,814.1 L428.0,813.9 L428.9,813.8 L429.8,813.2 L430.8,812.7 L431.7,812.7 L432.6,812.2 L433.6,812.4 L434.5,812.4 L435.5,811.4 L436.4,810.9 L437.3,810.3 L438.3,809.9 L439.2,810.0 L440.1,809.5 L441.1,809.0 L442.0,808.6 L443.0,808.6 L443.9,807.9 L444.8,807.9 L445.8,807.5 L446.7,806.8 L447.6,807.1 L448.6,806.8 L449.5,807.2 L450.5,806.8 L451.4,806.8 L452.3,806.5 L453.3,805.5 L454.2,805.2 L455.1,804.7 L456.1,804.0 L457.0,803.9 L458.0,803.4 L458.9,803.4 L459.8,803.3 L460.8,802.9 L461.7,803.1 L462.6,802.9 L463.6,803.0 L464.5,803.1 L465.5,802.2 L466.4,801.5 L467.3,800.7 L468.3,800.5 L469.2,800.2 L470.1,799.6 L471.1,799.3 L472.0,798.1 L473.0,797.7 L473.9,797.4 L474.8,796.6 L475.8,796.7 L476.7,796.2 L477.6,795.7 L478.6,796.0 L479.5,796.2 L480.5,795.4 L481.4,796.1 L482.3,795.3 L483.3,794.0 L484.2,794.0 L485.1,792.6 L486.1,792.8 L487.0,792.7 L488.0,792.2 L488.9,792.1 L489.8,790.8 L490.8,790.2 L491.7,790.3 L492.7,789.5 L493.6,789.4 L494.5,789.2 L495.5,788.8 L496.4,789.4 L497.3,789.0 L498.3,788.3 L499.2,787.7 L500.2,786.8 L501.1,786.4 L502.0,786.6 L503.0,786.6 L503.9,786.4 L504.8,786.1 L505.8,785.5 L506.7,784.0 L507.7,783.5 L508.6,782.8 L509.5,783.0 L510.5,783.5 L511.4,783.1 L512.3,783.0 L513.3,781.0 L514.2,780.6 L515.2,780.7 L516.1,780.1 L517.0,780.8 L518.0,780.4 L518.9,779.0 L519.8,779.1 L520.8,778.9 L521.7,778.4 L522.7,778.5 L523.6,778.0 L524.5,776.7 L525.5,776.2 L526.4,776.2 L527.3,775.1 L528.3,775.6 L529.2,775.0 L530.2,773.6 L531.1,773.6 L532.0,772.5 L533.0,772.4 L533.9,772.3 L534.8,772.3 L535.8,771.9 L536.7,771.6 L537.7,771.3 L538.6,770.5 L539.5,770.7 L540.5,770.3 L541.4,770.0 L542.3,769.3 L543.3,768.9 L544.2,768.6 L545.2,768.3 L546.1,768.4 L547.0,767.2 L548.0,766.3 L548.9,765.7 L549.8,765.4 L550.8,765.4 L551.7,765.1 L552.7,765.2 L553.6,764.9" stroke="#73BF69" stroke-width="1.1" fill="none" />
<text x="648.02" y="715.2" font-size="16" fill="#ccccdc" font-weight="normal" letter-spacing="0.336" stroke="#ccccdc" stroke-width="0.45" >Signage Points per 9.375s (Target 1)</text>
<g stroke="#9fa0aa" fill="none"><circle cx="946.4" cy="709.2" r="6.7" stroke-width="1.3"/><line x1="946.4" y1="709.3000000000001" x2="946.4" y2="712.7" stroke-width="1.25" stroke-linecap="round"/></g><circle cx="946.4" cy="706.7" r="0.85" fill="#9fa0aa"/>
<line x1="686.4" y1="745.5" x2="686.4" y2="962" stroke="rgba(240,250,255,0.09)" stroke-width="1" />
<line x1="762.7" y1="745.5" x2="762.7" y2="962" stroke="rgba(240,250,255,0.09)" stroke-width="1" />
<line x1="837.6" y1="745.5" x2="837.6" y2="962" stroke="rgba(240,250,255,0.09)" stroke-width="1" />
<line x1="912.5" y1="745.5" x2="912.5" y2="962" stroke="rgba(240,250,255,0.09)" stroke-width="1" />
<line x1="987.0" y1="745.5" x2="987.0" y2="962" stroke="rgba(240,250,255,0.09)" stroke-width="1" />
<line x1="1063.3" y1="745.5" x2="1063.3" y2="962" stroke="rgba(240,250,255,0.09)" stroke-width="1" />
<line x1="1138.6" y1="745.5" x2="1138.6" y2="962" stroke="rgba(240,250,255,0.09)" stroke-width="1" />
<line x1="1213.5" y1="745.5" x2="1213.5" y2="962" stroke="rgba(240,250,255,0.09)" stroke-width="1" />
<line x1="674.3" y1="775.3" x2="1243" y2="775.3" stroke="rgba(240,250,255,0.09)" stroke-width="1" />
<text x="667.6" y="779.4" font-size="14" fill="#ccccdc" text-anchor="end" font-weight="normal" >1.2</text>
<line x1="674.3" y1="836.4" x2="1243" y2="836.4" stroke="rgba(240,250,255,0.09)" stroke-width="1" />
<text x="667.6" y="840.5" font-size="14" fill="#ccccdc" text-anchor="end" font-weight="normal" >1.1</text>
<line x1="674.3" y1="897.2" x2="1243" y2="897.2" stroke="rgba(240,250,255,0.09)" stroke-width="1" />
<text x="667.6" y="901.3000000000001" font-size="14" fill="#ccccdc" text-anchor="end" font-weight="normal" >1</text>
<line x1="674.3" y1="958.2" x2="1243" y2="958.2" stroke="rgba(240,250,255,0.09)" stroke-width="1" />
<text x="667.6" y="962.3000000000001" font-size="14" fill="#ccccdc" text-anchor="end" font-weight="normal" >0.9</text>
<path d="M678.2,893.2 L679.4,871.2 L680.5,893.2 L681.6,871.2 L682.8,871.2 L683.9,893.2 L685.1,893.2 L686.2,893.2 L687.4,914.1 L688.5,893.2 L689.7,914.1 L690.8,893.2 L692.0,893.2 L693.1,893.2 L694.3,871.2 L695.4,893.2 L696.6,871.2 L697.7,893.2 L698.9,871.2 L700.0,893.2 L701.2,893.2 L702.3,871.2 L703.5,893.2 L704.6,871.2 L705.8,893.2 L706.9,893.2 L708.1,893.2 L709.2,893.2 L710.4,914.1 L711.5,914.1 L712.7,914.1 L713.8,893.2 L715.0,914.1 L716.1,893.2 L717.3,914.1 L718.4,893.2 L719.6,935.0 L720.7,893.2 L721.9,893.2 L723.0,893.2 L724.2,893.2 L725.3,893.2 L726.5,871.2 L727.6,871.2 L728.8,893.2 L729.9,850.0 L731.1,871.2 L732.2,893.2 L733.4,893.2 L734.5,893.2 L735.7,893.2 L736.8,893.2 L738.0,893.2 L739.1,893.2 L740.3,893.2 L741.4,893.2 L742.6,893.2 L743.7,871.2 L744.9,871.2 L746.0,893.2 L747.2,893.2 L748.3,893.2 L749.5,893.2 L750.6,893.2 L751.8,893.2 L752.9,914.1 L754.1,914.1 L755.2,893.2 L756.4,893.2 L757.5,893.2 L758.7,914.1 L759.8,893.2 L761.0,871.2 L762.1,893.2 L763.3,893.2 L764.4,893.2 L765.6,893.2 L766.7,893.2 L767.9,893.2 L769.0,871.2 L770.2,893.2 L771.3,871.2 L772.5,893.2 L773.6,893.2 L774.8,871.2 L775.9,893.2 L777.1,871.2 L778.2,893.2 L779.4,871.2 L780.5,893.2 L781.7,871.2 L782.8,893.2 L784.0,871.2 L785.1,893.2 L786.3,893.2 L787.4,871.2 L788.6,893.2 L789.7,871.2 L790.9,893.2 L792.0,766.0 L793.2,914.1 L794.3,893.2 L795.5,914.1 L796.6,914.1 L797.8,893.2 L798.9,914.1 L800.1,893.2 L801.2,914.1 L802.4,893.2 L803.5,893.2 L804.7,893.2 L805.8,914.1 L807.0,893.2 L808.1,914.1 L809.3,893.2 L810.4,914.1 L811.6,893.2 L812.7,893.2 L813.9,871.2 L815.0,893.2 L816.2,871.2 L817.3,893.2 L818.5,871.2 L819.6,871.2 L820.8,893.2 L821.9,893.2 L823.1,893.2 L824.2,871.2 L825.4,893.2 L826.5,871.2 L827.7,893.2 L828.8,871.2 L830.0,871.2 L831.1,893.2 L832.3,871.2 L833.4,914.1 L834.6,893.2 L835.7,893.2 L836.9,893.2 L838.0,914.1 L839.2,893.2 L840.3,914.1 L841.5,935.0 L842.6,893.2 L843.8,914.1 L844.9,914.1 L846.1,893.2 L847.2,914.1 L848.4,914.1 L849.5,893.2 L850.7,914.1 L851.8,893.2 L853.0,914.1 L854.1,914.1 L855.3,893.2 L856.4,914.1 L857.6,893.2 L858.7,914.1 L859.9,914.1 L861.0,893.2 L862.2,871.2 L863.3,893.2 L864.5,871.2 L865.6,871.2 L866.8,893.2 L867.9,871.2 L869.1,893.2 L870.2,871.2 L871.4,871.2 L872.5,850.0 L873.7,893.2 L874.8,893.2 L876.0,893.2 L877.1,893.2 L878.3,893.2 L879.4,871.2 L880.6,893.2 L881.7,871.2 L882.9,893.2 L884.0,893.2 L885.2,871.2 L886.3,893.2 L887.5,893.2 L888.6,914.1 L889.8,893.2 L890.9,914.1 L892.1,893.2 L893.2,914.1 L894.4,893.2 L895.5,893.2 L896.7,914.1 L897.8,914.1 L899.0,914.1 L900.1,893.2 L901.3,914.1 L902.4,893.2 L903.6,893.2 L904.7,914.1 L905.9,893.2 L907.0,914.1 L908.2,893.2 L909.3,871.2 L910.5,893.2 L911.6,893.2 L912.8,871.2 L913.9,893.2 L915.1,871.2 L916.2,871.2 L917.4,893.2 L918.5,893.2 L919.7,871.2 L920.8,893.2 L922.0,893.2 L923.1,808.6 L924.3,893.2 L925.4,893.2 L926.6,871.2 L927.7,871.2 L928.9,893.2 L930.0,871.2 L931.2,871.2 L932.3,893.2 L933.5,871.2 L934.6,893.2 L935.8,893.2 L936.9,893.2 L938.1,893.2 L939.2,893.2 L940.4,893.2 L941.5,893.2 L942.7,893.2 L943.8,871.2 L945.0,893.2 L946.1,893.2 L947.3,914.1 L948.4,893.2 L949.6,893.2 L950.7,893.2 L951.9,893.2 L953.0,914.1 L954.2,893.2 L955.3,914.1 L956.5,893.2 L957.6,893.2 L958.8,914.1 L959.9,893.2 L961.1,914.1 L962.2,893.2 L963.4,871.2 L964.5,871.2 L965.7,871.2 L966.8,893.2 L968.0,871.2 L969.1,893.2 L970.3,893.2 L971.4,871.2 L972.6,893.2 L973.7,893.2 L974.9,893.2 L976.0,871.2 L977.2,893.2 L978.3,871.2 L979.5,893.2 L980.6,871.2 L981.8,871.2 L982.9,871.2 L984.1,893.2 L985.2,914.1 L986.4,914.1 L987.5,829.4 L988.7,914.1 L989.8,914.1 L991.0,935.0 L992.1,914.1 L993.3,893.2 L994.4,914.1 L995.6,893.2 L996.7,893.2 L997.9,914.1 L999.0,914.1 L1000.2,893.2 L1001.3,914.1 L1002.5,893.2 L1003.6,808.6 L1004.8,893.2 L1005.9,893.2 L1007.1,893.2 L1008.2,850.0 L1009.4,893.2 L1010.5,893.2 L1011.7,893.2 L1012.8,871.2 L1014.0,893.2 L1015.1,893.2 L1016.3,871.2 L1017.4,893.2 L1018.6,871.2 L1019.7,893.2 L1020.9,871.2 L1022.0,893.2 L1023.2,893.2 L1024.3,893.2 L1025.5,893.2 L1026.6,893.2 L1027.8,871.2 L1028.9,893.2 L1030.1,893.2 L1031.2,893.2 L1032.4,893.2 L1033.5,893.2 L1034.7,893.2 L1035.8,893.2 L1037.0,893.2 L1038.1,893.2 L1039.3,893.2 L1040.4,850.0 L1041.6,914.1 L1042.7,893.2 L1043.9,914.1 L1045.0,893.2 L1046.2,914.1 L1047.3,871.2 L1048.5,893.2 L1049.6,893.2 L1050.8,871.2 L1051.9,893.2 L1053.1,871.2 L1054.2,871.2 L1055.4,829.4 L1056.5,893.2 L1057.7,893.2 L1058.8,871.2 L1060.0,871.2 L1061.1,893.2 L1062.3,871.2 L1063.4,893.2 L1064.6,893.2 L1065.7,893.2 L1066.9,850.0 L1068.0,893.2 L1069.2,893.2 L1070.3,914.1 L1071.5,893.2 L1072.6,914.1 L1073.8,893.2 L1074.9,914.1 L1076.1,893.2 L1077.2,893.2 L1078.4,914.1 L1079.5,935.0 L1080.7,893.2 L1081.8,871.2 L1083.0,893.2 L1084.1,871.2 L1085.3,893.2 L1086.4,893.2 L1087.6,893.2 L1088.7,893.2 L1089.9,893.2 L1091.0,893.2 L1092.2,893.2 L1093.3,893.2 L1094.5,871.2 L1095.6,893.2 L1096.8,871.2 L1097.9,893.2 L1099.1,871.2 L1100.2,871.2 L1101.4,893.2 L1102.5,871.2 L1103.7,893.2 L1104.8,893.2 L1106.0,871.2 L1107.1,914.1 L1108.3,893.2 L1109.4,914.1 L1110.6,893.2 L1111.7,893.2 L1112.9,829.4 L1114.0,893.2 L1115.2,914.1 L1116.3,914.1 L1117.5,893.2 L1118.6,914.1 L1119.8,893.2 L1120.9,914.1 L1122.1,893.2 L1123.2,893.2 L1124.4,914.1 L1125.5,893.2 L1126.7,893.2 L1127.8,914.1 L1129.0,914.1 L1130.1,893.2 L1131.3,914.1 L1132.4,893.2 L1133.6,914.1 L1134.7,914.1 L1135.9,893.2 L1137.0,914.1 L1138.2,893.2 L1139.3,871.2 L1140.5,850.0 L1141.6,893.2 L1142.8,871.2 L1143.9,893.2 L1145.1,871.2 L1146.2,893.2 L1147.4,893.2 L1148.5,893.2 L1149.7,893.2 L1150.8,893.2 L1152.0,871.2 L1153.1,893.2 L1154.3,871.2 L1155.4,893.2 L1156.6,871.2 L1157.7,871.2 L1158.9,871.2 L1160.0,871.2 L1161.2,893.2 L1162.3,871.2 L1163.5,893.2 L1164.6,871.2 L1165.8,893.2 L1166.9,871.2 L1168.1,871.2 L1169.2,893.2 L1170.4,893.2 L1171.5,893.2 L1172.7,893.2 L1173.8,893.2 L1175.0,829.4 L1176.1,935.0 L1177.3,893.2 L1178.4,893.2 L1179.6,893.2 L1180.7,893.2 L1181.9,914.1 L1183.0,914.1 L1184.2,893.2 L1185.3,914.1 L1186.5,893.2 L1187.6,914.1 L1188.8,893.2 L1189.9,914.1 L1191.1,914.1 L1192.2,914.1 L1193.4,893.2 L1194.5,914.1 L1195.7,914.1 L1196.8,893.2 L1198.0,914.1 L1199.1,914.1 L1200.3,914.1 L1201.4,893.2 L1202.6,914.1 L1203.7,914.1 L1204.9,893.2 L1206.0,893.2 L1207.2,935.0 L1208.3,893.2 L1209.5,893.2 L1210.6,893.2 L1211.8,893.2 L1212.9,893.2 L1214.1,914.1 L1215.2,893.2 L1216.4,871.2 L1217.5,871.2 L1218.7,871.2 L1219.8,893.2 L1221.0,871.2 L1222.1,893.2 L1223.3,893.2 L1224.4,893.2 L1225.6,850.0 L1226.7,893.2 L1227.9,893.2 L1229.0,893.2 L1230.2,871.2 L1231.3,893.2 L1232.5,871.2 L1233.6,893.2 L1234.8,893.2 L1235.9,871.2 L1237.1,871.2 L1238.2,893.2 L1239.4,871.2 L1240.5,893.2 L1241.7,871.2 L1242.8,893.2" stroke="#73BF69" stroke-width="1.1" fill="none" />
<text x="1277.33" y="715.2" font-size="16" fill="#ccccdc" font-weight="normal" letter-spacing="0.225" stroke="#ccccdc" stroke-width="0.45" >Plot K Size</text>
<g stroke="#9fa0aa" fill="none"><circle cx="1384.2" cy="709.2" r="6.7" stroke-width="1.3"/><line x1="1384.2" y1="709.3000000000001" x2="1384.2" y2="712.7" stroke-width="1.25" stroke-linecap="round"/></g><circle cx="1384.2" cy="706.7" r="0.85" fill="#9fa0aa"/>
<rect x="1278.4" y="763.3" width="111.59999999999991" height="208.70000000000005" fill="#73BF69" stroke="none" stroke-width="1" rx="1.5" />
<text x="1334.2" y="756.5" text-anchor="middle" fill="#73BF69" font-size="23">97.2<tspan font-size="17">%</tspan></text>
<rect x="1401" y="766.3" width="111" height="205.70000000000005" fill="#22252b" stroke="none" stroke-width="1" rx="1.5" />
<text x="1456.5" y="756.5" text-anchor="middle" fill="#73BF69" font-size="23">2.37<tspan font-size="17">%</tspan></text>
<rect x="1523" y="766.3" width="111.79999999999995" height="205.70000000000005" fill="#22252b" stroke="none" stroke-width="1" rx="1.5" />
<text x="1578.9" y="756.5" text-anchor="middle" fill="#73BF69" font-size="23">0.359<tspan font-size="17">%</tspan></text>
<rect x="1646.3" y="766.3" width="111.5" height="205.70000000000005" fill="#22252b" stroke="none" stroke-width="1" rx="1.5" />
<text x="1702.0" y="756.5" text-anchor="middle" fill="#73BF69" font-size="23">0.0407<tspan font-size="17">%</tspan></text>
<rect x="1768.9" y="766.3" width="111.79999999999995" height="205.70000000000005" fill="#22252b" stroke="none" stroke-width="1" rx="1.5" />
<text x="1824.8" y="756.5" text-anchor="middle" fill="#73BF69" font-size="23">0.00365<tspan font-size="17">%</tspan></text>
<line x1="0" y1="961.5" x2="1905" y2="961.5" stroke="#1d3338" stroke-width="1" />
<line x1="186" y1="961.5" x2="230" y2="961.5" stroke="#5b6568" stroke-width="1" />
</svg>
</body></html>
